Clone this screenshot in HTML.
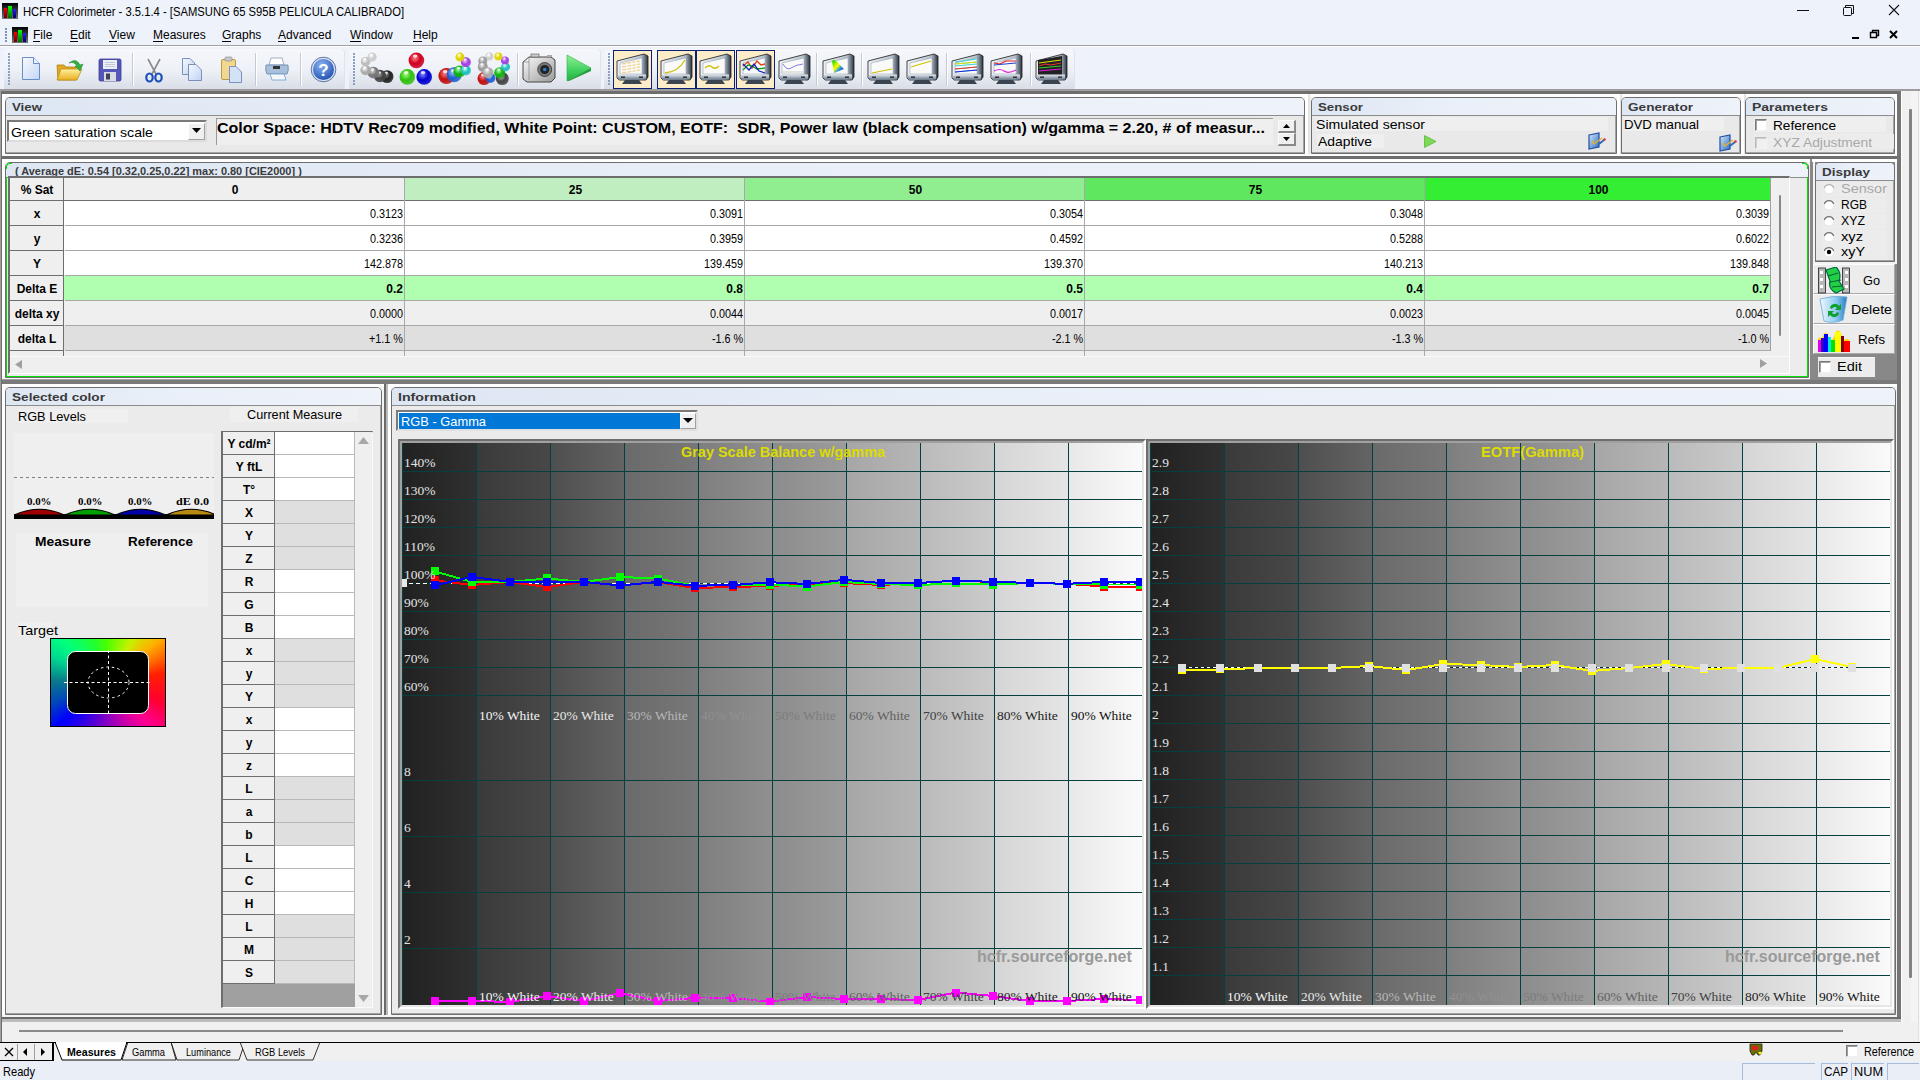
<!DOCTYPE html><html><head><meta charset="utf-8"><title>HCFR Colorimeter</title><style>
html,body{margin:0;padding:0}
body{width:1920px;height:1080px;position:relative;overflow:hidden;background:#f0f0f0;font-family:"Liberation Sans",sans-serif;font-size:12px}
.a{position:absolute;box-sizing:border-box}
.t{position:absolute;white-space:pre}
</style></head><body>
<div class="a" style="left:0px;top:0px;width:1920px;height:90px;background:#eef2fa;"></div>
<svg class="a" style="left:2px;top:3px;" width="16" height="16" viewBox="0 0 16 16"><defs><linearGradient id="gi" x1="0" y1="0" x2="0" y2="1"><stop offset="0" stop-color="#000"/><stop offset="1" stop-color="#777"/></linearGradient><linearGradient id="gr" x1="0" y1="0" x2="0" y2="1"><stop offset="0" stop-color="#f00"/><stop offset="1" stop-color="#600"/></linearGradient><linearGradient id="gg" x1="0" y1="0" x2="0" y2="1"><stop offset="0" stop-color="#0f0"/><stop offset="1" stop-color="#060"/></linearGradient><linearGradient id="gb" x1="0" y1="0" x2="0" y2="1"><stop offset="0" stop-color="#22f"/><stop offset="1" stop-color="#006"/></linearGradient></defs><rect x="0" y="0" width="16" height="16" fill="url(#gi)"/><rect x="2" y="5" width="3" height="10" fill="url(#gr)"/><rect x="6" y="3" width="4" height="12" fill="url(#gg)"/><rect x="11" y="6" width="3" height="9" fill="url(#gb)"/></svg>
<div class="t" style="left:23.00px;top:5.84px;font-size:12px;line-height:12px;font-family:'Liberation Sans',sans-serif;font-weight:400;color:#000;transform:scaleX(0.9368);transform-origin:0 0;">HCFR Colorimeter - 3.5.1.4 - [SAMSUNG 65 S95B PELICULA CALIBRADO]</div>
<svg class="a" style="left:1790px;top:0px;" width="120" height="22" viewBox="0 0 120 22"><line x1="7" y1="10.5" x2="19" y2="10.5" stroke="#111" stroke-width="1"/><rect x="53.5" y="7.5" width="8" height="8" fill="none" stroke="#111" rx="1"/><path d="M55.5 7.5 V5.5 H63.5 V13.5 H61.5" fill="none" stroke="#111"/><path d="M99 5 L109 15 M109 5 L99 15" stroke="#111" stroke-width="1.1"/></svg>
<div class="a" style="left:0px;top:45px;width:1920px;height:1px;background:#a0a0a0;"></div>
<div class="a" style="left:0px;top:46px;width:1920px;height:1px;background:#ffffff;"></div>
<div class="a" style="left:5px;top:28px;width:2px;height:2px;background:#7d94b5;"></div>
<div class="a" style="left:5px;top:31px;width:2px;height:2px;background:#7d94b5;"></div>
<div class="a" style="left:5px;top:34px;width:2px;height:2px;background:#7d94b5;"></div>
<div class="a" style="left:5px;top:37px;width:2px;height:2px;background:#7d94b5;"></div>
<div class="a" style="left:5px;top:40px;width:2px;height:2px;background:#7d94b5;"></div>
<svg class="a" style="left:12px;top:27px;" width="16" height="16" viewBox="0 0 16 16"><defs><linearGradient id="gi" x1="0" y1="0" x2="0" y2="1"><stop offset="0" stop-color="#000"/><stop offset="1" stop-color="#777"/></linearGradient><linearGradient id="gr" x1="0" y1="0" x2="0" y2="1"><stop offset="0" stop-color="#f00"/><stop offset="1" stop-color="#600"/></linearGradient><linearGradient id="gg" x1="0" y1="0" x2="0" y2="1"><stop offset="0" stop-color="#0f0"/><stop offset="1" stop-color="#060"/></linearGradient><linearGradient id="gb" x1="0" y1="0" x2="0" y2="1"><stop offset="0" stop-color="#22f"/><stop offset="1" stop-color="#006"/></linearGradient></defs><rect x="0" y="0" width="16" height="16" fill="url(#gi)"/><rect x="2" y="5" width="3" height="10" fill="url(#gr)"/><rect x="6" y="3" width="4" height="12" fill="url(#gg)"/><rect x="11" y="6" width="3" height="9" fill="url(#gb)"/></svg>
<div class="t" style="left:33.00px;top:28.84px;font-size:12px;line-height:12px;font-family:'Liberation Sans',sans-serif;font-weight:400;color:#000;">File</div>
<div class="a" style="left:33px;top:41px;width:7px;height:1px;background:#000;"></div>
<div class="t" style="left:70.00px;top:28.84px;font-size:12px;line-height:12px;font-family:'Liberation Sans',sans-serif;font-weight:400;color:#000;">Edit</div>
<div class="a" style="left:70px;top:41px;width:8px;height:1px;background:#000;"></div>
<div class="t" style="left:109.00px;top:28.84px;font-size:12px;line-height:12px;font-family:'Liberation Sans',sans-serif;font-weight:400;color:#000;">View</div>
<div class="a" style="left:109px;top:41px;width:8px;height:1px;background:#000;"></div>
<div class="t" style="left:153.00px;top:28.84px;font-size:12px;line-height:12px;font-family:'Liberation Sans',sans-serif;font-weight:400;color:#000;">Measures</div>
<div class="a" style="left:153px;top:41px;width:10px;height:1px;background:#000;"></div>
<div class="t" style="left:222.00px;top:28.84px;font-size:12px;line-height:12px;font-family:'Liberation Sans',sans-serif;font-weight:400;color:#000;">Graphs</div>
<div class="a" style="left:222px;top:41px;width:9px;height:1px;background:#000;"></div>
<div class="t" style="left:278.00px;top:28.84px;font-size:12px;line-height:12px;font-family:'Liberation Sans',sans-serif;font-weight:400;color:#000;">Advanced</div>
<div class="a" style="left:278px;top:41px;width:8px;height:1px;background:#000;"></div>
<div class="t" style="left:350.00px;top:28.84px;font-size:12px;line-height:12px;font-family:'Liberation Sans',sans-serif;font-weight:400;color:#000;">Window</div>
<div class="a" style="left:350px;top:41px;width:11px;height:1px;background:#000;"></div>
<div class="t" style="left:413.00px;top:28.84px;font-size:12px;line-height:12px;font-family:'Liberation Sans',sans-serif;font-weight:400;color:#000;">Help</div>
<div class="a" style="left:413px;top:41px;width:9px;height:1px;background:#000;"></div>
<svg class="a" style="left:1845px;top:26px;" width="60" height="16" viewBox="0 0 60 16"><rect x="7" y="11" width="7" height="2" fill="#000"/><path d="M25.5 6.5 h6 v5 h-6 z M27.5 6.5 v-2 h6 v5 h-2" fill="none" stroke="#000" stroke-width="1.4"/><path d="M45 5 L52 12 M52 5 L45 12" stroke="#000" stroke-width="2"/></svg>
<div class="a" style="left:4px;top:49px;width:341px;height:41px;background:linear-gradient(#f5f7fb,#eef1f7 50%,#d8dde6);border-radius:4px 4px 0 0;box-shadow:inset -1px 0 0 #e0e4ea;"></div>
<div class="a" style="left:8px;top:53px;width:2px;height:2px;background:#8aa0c0;"></div>
<div class="a" style="left:8px;top:56px;width:2px;height:2px;background:#8aa0c0;"></div>
<div class="a" style="left:8px;top:59px;width:2px;height:2px;background:#8aa0c0;"></div>
<div class="a" style="left:8px;top:62px;width:2px;height:2px;background:#8aa0c0;"></div>
<div class="a" style="left:8px;top:65px;width:2px;height:2px;background:#8aa0c0;"></div>
<div class="a" style="left:8px;top:68px;width:2px;height:2px;background:#8aa0c0;"></div>
<div class="a" style="left:8px;top:71px;width:2px;height:2px;background:#8aa0c0;"></div>
<div class="a" style="left:8px;top:74px;width:2px;height:2px;background:#8aa0c0;"></div>
<div class="a" style="left:8px;top:77px;width:2px;height:2px;background:#8aa0c0;"></div>
<div class="a" style="left:8px;top:80px;width:2px;height:2px;background:#8aa0c0;"></div>
<div class="a" style="left:8px;top:83px;width:2px;height:2px;background:#8aa0c0;"></div>
<div class="a" style="left:349px;top:49px;width:252px;height:41px;background:linear-gradient(#f5f7fb,#eef1f7 50%,#d8dde6);border-radius:4px 4px 0 0;box-shadow:inset -1px 0 0 #e0e4ea;"></div>
<div class="a" style="left:353px;top:53px;width:2px;height:2px;background:#8aa0c0;"></div>
<div class="a" style="left:353px;top:56px;width:2px;height:2px;background:#8aa0c0;"></div>
<div class="a" style="left:353px;top:59px;width:2px;height:2px;background:#8aa0c0;"></div>
<div class="a" style="left:353px;top:62px;width:2px;height:2px;background:#8aa0c0;"></div>
<div class="a" style="left:353px;top:65px;width:2px;height:2px;background:#8aa0c0;"></div>
<div class="a" style="left:353px;top:68px;width:2px;height:2px;background:#8aa0c0;"></div>
<div class="a" style="left:353px;top:71px;width:2px;height:2px;background:#8aa0c0;"></div>
<div class="a" style="left:353px;top:74px;width:2px;height:2px;background:#8aa0c0;"></div>
<div class="a" style="left:353px;top:77px;width:2px;height:2px;background:#8aa0c0;"></div>
<div class="a" style="left:353px;top:80px;width:2px;height:2px;background:#8aa0c0;"></div>
<div class="a" style="left:353px;top:83px;width:2px;height:2px;background:#8aa0c0;"></div>
<div class="a" style="left:604px;top:49px;width:471px;height:41px;background:linear-gradient(#f5f7fb,#eef1f7 50%,#d8dde6);border-radius:4px 4px 0 0;box-shadow:inset -1px 0 0 #e0e4ea;"></div>
<div class="a" style="left:608px;top:53px;width:2px;height:2px;background:#8aa0c0;"></div>
<div class="a" style="left:608px;top:56px;width:2px;height:2px;background:#8aa0c0;"></div>
<div class="a" style="left:608px;top:59px;width:2px;height:2px;background:#8aa0c0;"></div>
<div class="a" style="left:608px;top:62px;width:2px;height:2px;background:#8aa0c0;"></div>
<div class="a" style="left:608px;top:65px;width:2px;height:2px;background:#8aa0c0;"></div>
<div class="a" style="left:608px;top:68px;width:2px;height:2px;background:#8aa0c0;"></div>
<div class="a" style="left:608px;top:71px;width:2px;height:2px;background:#8aa0c0;"></div>
<div class="a" style="left:608px;top:74px;width:2px;height:2px;background:#8aa0c0;"></div>
<div class="a" style="left:608px;top:77px;width:2px;height:2px;background:#8aa0c0;"></div>
<div class="a" style="left:608px;top:80px;width:2px;height:2px;background:#8aa0c0;"></div>
<div class="a" style="left:608px;top:83px;width:2px;height:2px;background:#8aa0c0;"></div>
<div class="a" style="left:0px;top:89px;width:1920px;height:1px;background:#b0b4ba;"></div>
<div class="a" style="left:132px;top:53px;width:1px;height:33px;background:#c5cad2;"></div>
<div class="a" style="left:133px;top:53px;width:1px;height:33px;background:#ffffff;"></div>
<div class="a" style="left:255px;top:53px;width:1px;height:33px;background:#c5cad2;"></div>
<div class="a" style="left:256px;top:53px;width:1px;height:33px;background:#ffffff;"></div>
<div class="a" style="left:300px;top:53px;width:1px;height:33px;background:#c5cad2;"></div>
<div class="a" style="left:301px;top:53px;width:1px;height:33px;background:#ffffff;"></div>
<div class="a" style="left:517px;top:53px;width:1px;height:33px;background:#c5cad2;"></div>
<div class="a" style="left:518px;top:53px;width:1px;height:33px;background:#ffffff;"></div>
<div class="a" style="left:816px;top:53px;width:1px;height:33px;background:#c5cad2;"></div>
<div class="a" style="left:817px;top:53px;width:1px;height:33px;background:#ffffff;"></div>
<div class="a" style="left:861px;top:53px;width:1px;height:33px;background:#c5cad2;"></div>
<div class="a" style="left:862px;top:53px;width:1px;height:33px;background:#ffffff;"></div>
<div class="a" style="left:946px;top:53px;width:1px;height:33px;background:#c5cad2;"></div>
<div class="a" style="left:947px;top:53px;width:1px;height:33px;background:#ffffff;"></div>
<div class="a" style="left:1030px;top:53px;width:1px;height:33px;background:#c5cad2;"></div>
<div class="a" style="left:1031px;top:53px;width:1px;height:33px;background:#ffffff;"></div>
<svg class="a" style="left:20px;top:55px;" width="22" height="27" viewBox="0 0 22 27"><defs><linearGradient id="ndg" x1="0" y1="0" x2="1" y2="1"><stop offset="0" stop-color="#f8fbff"/><stop offset="1" stop-color="#c4d6f4"/></linearGradient></defs><path d="M2.5 2.5 H13.5 L19.5 8.5 V24.5 H2.5 Z" fill="url(#ndg)" stroke="#6a8cc8"/><path d="M13.5 2.5 V8.5 H19.5" fill="#e8f0fc" stroke="#6a8cc8"/></svg>
<svg class="a" style="left:56px;top:57px;" width="28" height="25" viewBox="0 0 28 25"><defs><linearGradient id="fdg" x1="0" y1="0" x2="0" y2="1"><stop offset="0" stop-color="#fff0a0"/><stop offset="1" stop-color="#e8b020"/></linearGradient></defs><path d="M1 8 h7 l2 2 h10 v13 H2 Z" fill="#e0a820" stroke="#b08010" stroke-width="0.8"/><path d="M1 23 L5 12 H26 L21 23 Z" fill="url(#fdg)" stroke="#c09020" stroke-width="0.8"/><path d="M13 6 Q20 0 24 8 L27 7 L24 14 L19 9 L21 9 Q18 4 13 6 Z" fill="#30b040" stroke="#208030" stroke-width="0.5"/></svg>
<svg class="a" style="left:98px;top:58px;" width="24" height="24" viewBox="0 0 24 24"><rect x="1" y="1" width="22" height="22" rx="1.5" fill="#5456b8" stroke="#3a3c90" stroke-width="0.8"/><rect x="5" y="2" width="14" height="9" fill="#eceef6"/><path d="M7 4.5 H17 M7 6.5 H17 M7 8.5 H17" stroke="#b0b4c8" stroke-width="0.7"/><rect x="6" y="14" width="12" height="9" fill="#d8dae4"/><rect x="8" y="15.5" width="4" height="6" fill="#40425a"/></svg>
<svg class="a" style="left:144px;top:57px;" width="20" height="26" viewBox="0 0 20 26"><path d="M4 2 L12 17 M16 2 L8 17" stroke="#8a8a8a" stroke-width="1.6"/><ellipse cx="5.5" cy="20.5" rx="3.2" ry="4" fill="none" stroke="#1d4fb8" stroke-width="2.2"/><ellipse cx="14.5" cy="20.5" rx="3.2" ry="4" fill="none" stroke="#1d4fb8" stroke-width="2.2"/></svg>
<svg class="a" style="left:180px;top:56px;" width="24" height="27" viewBox="0 0 24 27"><defs><linearGradient id="cpg" x1="0" y1="0" x2="1" y2="1"><stop offset="0" stop-color="#f4f8ff"/><stop offset="1" stop-color="#c0d4f4"/></linearGradient></defs><path d="M2.5 2.5 H10 L14.5 7 V18.5 H2.5 Z" fill="url(#cpg)" stroke="#7a90b8"/><path d="M8.5 8.5 H16 L21.5 14 V24.5 H8.5 Z" fill="url(#cpg)" stroke="#7a90b8"/></svg>
<svg class="a" style="left:220px;top:56px;" width="24" height="28" viewBox="0 0 24 28"><rect x="1.5" y="3.5" width="14" height="20" rx="1.5" fill="#f0d890" stroke="#b89a40"/><rect x="5" y="1" width="7" height="4" rx="1" fill="#c8c8c8" stroke="#888" stroke-width="0.6"/><path d="M9.5 10.5 H16 L21.5 16 V26.5 H9.5 Z" fill="#d4e2f8" stroke="#7a90b8"/></svg>
<svg class="a" style="left:264px;top:57px;" width="26" height="25" viewBox="0 0 26 25"><path d="M7 1 H18 L20 8 H5 Z" fill="#fff" stroke="#8a9ab0" stroke-width="0.8"/><path d="M2 8 Q1 14 3 17 H23 Q25 14 24 8 Z" fill="#a8c0dc" stroke="#6a84a8" stroke-width="0.8"/><rect x="9" y="9" width="7" height="3" fill="#333"/><path d="M6 17 L8 23 H22 L20 17 Z" fill="#f4f8fc" stroke="#6aa0d0" stroke-width="0.8"/></svg>
<svg class="a" style="left:310px;top:56px;" width="27" height="27" viewBox="0 0 27 27"><defs><radialGradient id="hg" cx="0.4" cy="0.3" r="0.75"><stop offset="0" stop-color="#8ab4f4"/><stop offset="1" stop-color="#1f4fb0"/></radialGradient></defs><circle cx="13.5" cy="13.5" r="12.3" fill="#d8e0ee" stroke="#5a74a8" stroke-width="1"/><circle cx="13.5" cy="13.5" r="10.5" fill="url(#hg)"/><text x="13.5" y="20" font-family="Liberation Sans" font-weight="700" font-size="17" fill="#fff" text-anchor="middle">?</text></svg>
<svg class="a" style="left:355px;top:50px;" width="40" height="36" viewBox="0 0 40 36"><defs><radialGradient id="bg1" cx="0.4" cy="0.35" r="0.65"><stop offset="0" stop-color="#888"/><stop offset="0.55" stop-color="#222"/><stop offset="1" stop-color="#222" stop-opacity="0.85"/></radialGradient></defs><circle cx="32.10000000000002" cy="26.599999999999994" r="6.4" fill="url(#bg1)"/><ellipse cx="31.1" cy="23.1" rx="1.9" ry="1.3" fill="#fff" opacity="0.8"/><defs><radialGradient id="bg2" cx="0.4" cy="0.35" r="0.65"><stop offset="0" stop-color="#aaa"/><stop offset="0.55" stop-color="#444"/><stop offset="1" stop-color="#444" stop-opacity="0.85"/></radialGradient></defs><circle cx="25" cy="26" r="6.2" fill="url(#bg2)"/><ellipse cx="24.1" cy="22.6" rx="1.9" ry="1.2" fill="#fff" opacity="0.8"/><defs><radialGradient id="bg3" cx="0.4" cy="0.35" r="0.65"><stop offset="0" stop-color="#ddd"/><stop offset="0.55" stop-color="#777"/><stop offset="1" stop-color="#777" stop-opacity="0.85"/></radialGradient></defs><circle cx="18.399999999999977" cy="22.700000000000003" r="5.9" fill="url(#bg3)"/><ellipse cx="17.5" cy="19.5" rx="1.8" ry="1.2" fill="#fff" opacity="0.8"/><defs><radialGradient id="bg4" cx="0.4" cy="0.35" r="0.65"><stop offset="0" stop-color="#fff"/><stop offset="0.55" stop-color="#aaa"/><stop offset="1" stop-color="#aaa" stop-opacity="0.85"/></radialGradient></defs><circle cx="10.600000000000023" cy="20.099999999999994" r="5.2" fill="url(#bg4)"/><ellipse cx="9.8" cy="17.2" rx="1.6" ry="1.0" fill="#fff" opacity="0.8"/><defs><radialGradient id="bg5" cx="0.4" cy="0.35" r="0.65"><stop offset="0" stop-color="#fff"/><stop offset="0.55" stop-color="#bbb"/><stop offset="1" stop-color="#bbb" stop-opacity="0.85"/></radialGradient></defs><circle cx="10.600000000000023" cy="11.700000000000003" r="4.8" fill="url(#bg5)"/><ellipse cx="9.9" cy="9.1" rx="1.4" ry="1.0" fill="#fff" opacity="0.8"/><defs><radialGradient id="bg6" cx="0.4" cy="0.35" r="0.65"><stop offset="0" stop-color="#fff"/><stop offset="0.55" stop-color="#ccc"/><stop offset="1" stop-color="#ccc" stop-opacity="0.85"/></radialGradient></defs><circle cx="17.100000000000023" cy="7.100000000000001" r="4.6" fill="url(#bg6)"/><ellipse cx="16.4" cy="4.6" rx="1.4" ry="0.9" fill="#fff" opacity="0.8"/></svg>
<svg class="a" style="left:398px;top:50px;" width="36" height="36" viewBox="0 0 36 36"><defs><radialGradient id="bg7" cx="0.4" cy="0.35" r="0.65"><stop offset="0" stop-color="#ff8080"/><stop offset="0.55" stop-color="#d00020"/><stop offset="1" stop-color="#d00020" stop-opacity="0.85"/></radialGradient></defs><circle cx="18.399999999999977" cy="10.399999999999999" r="7.8" fill="url(#bg7)"/><ellipse cx="17.2" cy="6.1" rx="2.3" ry="1.6" fill="#fff" opacity="0.8"/><defs><radialGradient id="bg8" cx="0.4" cy="0.35" r="0.65"><stop offset="0" stop-color="#a0ff80"/><stop offset="0.55" stop-color="#30c010"/><stop offset="1" stop-color="#30c010" stop-opacity="0.85"/></radialGradient></defs><circle cx="9.300000000000011" cy="26.900000000000006" r="7.8" fill="url(#bg8)"/><ellipse cx="8.1" cy="22.6" rx="2.3" ry="1.6" fill="#fff" opacity="0.8"/><defs><radialGradient id="bg9" cx="0.4" cy="0.35" r="0.65"><stop offset="0" stop-color="#8080ff"/><stop offset="0.55" stop-color="#0000d0"/><stop offset="1" stop-color="#0000d0" stop-opacity="0.85"/></radialGradient></defs><circle cx="26.19999999999999" cy="26.900000000000006" r="7.8" fill="url(#bg9)"/><ellipse cx="25.0" cy="22.6" rx="2.3" ry="1.6" fill="#fff" opacity="0.8"/></svg>
<svg class="a" style="left:436px;top:50px;" width="40" height="36" viewBox="0 0 40 36"><defs><radialGradient id="bg10" cx="0.4" cy="0.35" r="0.65"><stop offset="0" stop-color="#ff8080"/><stop offset="0.55" stop-color="#c01010"/><stop offset="1" stop-color="#c01010" stop-opacity="0.85"/></radialGradient></defs><circle cx="10.399999999999977" cy="26" r="8" fill="url(#bg10)"/><ellipse cx="9.2" cy="21.6" rx="2.4" ry="1.6" fill="#fff" opacity="0.8"/><defs><radialGradient id="bg11" cx="0.4" cy="0.35" r="0.65"><stop offset="0" stop-color="#a0c0ff"/><stop offset="0.55" stop-color="#2060d0"/><stop offset="1" stop-color="#2060d0" stop-opacity="0.85"/></radialGradient></defs><circle cx="18.19999999999999" cy="24.700000000000003" r="7.5" fill="url(#bg11)"/><ellipse cx="17.1" cy="20.6" rx="2.2" ry="1.5" fill="#fff" opacity="0.8"/><defs><radialGradient id="bg12" cx="0.4" cy="0.35" r="0.65"><stop offset="0" stop-color="#a0ffa0"/><stop offset="0.55" stop-color="#10b010"/><stop offset="1" stop-color="#10b010" stop-opacity="0.85"/></radialGradient></defs><circle cx="23.399999999999977" cy="21.400000000000006" r="6" fill="url(#bg12)"/><ellipse cx="22.5" cy="18.1" rx="1.8" ry="1.2" fill="#fff" opacity="0.8"/><defs><radialGradient id="bg13" cx="0.4" cy="0.35" r="0.65"><stop offset="0" stop-color="#c0ffff"/><stop offset="0.55" stop-color="#20c0c0"/><stop offset="1" stop-color="#20c0c0" stop-opacity="0.85"/></radialGradient></defs><circle cx="29.899999999999977" cy="20.400000000000006" r="5" fill="url(#bg13)"/><ellipse cx="29.1" cy="17.7" rx="1.5" ry="1.0" fill="#fff" opacity="0.8"/><defs><radialGradient id="bg14" cx="0.4" cy="0.35" r="0.65"><stop offset="0" stop-color="#f0c0ff"/><stop offset="0.55" stop-color="#a040e0"/><stop offset="1" stop-color="#a040e0" stop-opacity="0.85"/></radialGradient></defs><circle cx="29.899999999999977" cy="12.299999999999997" r="5" fill="url(#bg14)"/><ellipse cx="29.1" cy="9.5" rx="1.5" ry="1.0" fill="#fff" opacity="0.8"/><defs><radialGradient id="bg15" cx="0.4" cy="0.35" r="0.65"><stop offset="0" stop-color="#ffffa0"/><stop offset="0.55" stop-color="#e0d000"/><stop offset="1" stop-color="#e0d000" stop-opacity="0.85"/></radialGradient></defs><circle cx="24" cy="7.100000000000001" r="4.5" fill="url(#bg15)"/><ellipse cx="23.3" cy="4.6" rx="1.3" ry="0.9" fill="#fff" opacity="0.8"/></svg>
<svg class="a" style="left:474px;top:50px;" width="40" height="36" viewBox="0 0 40 36"><defs><radialGradient id="bg16" cx="0.4" cy="0.35" r="0.65"><stop offset="0" stop-color="#ff8080"/><stop offset="0.55" stop-color="#c01010"/><stop offset="1" stop-color="#c01010" stop-opacity="0.85"/></radialGradient></defs><circle cx="10" cy="28.599999999999994" r="6.5" fill="url(#bg16)"/><ellipse cx="9.0" cy="25.0" rx="1.9" ry="1.3" fill="#fff" opacity="0.8"/><defs><radialGradient id="bg17" cx="0.4" cy="0.35" r="0.65"><stop offset="0" stop-color="#a0c0ff"/><stop offset="0.55" stop-color="#2060d0"/><stop offset="1" stop-color="#2060d0" stop-opacity="0.85"/></radialGradient></defs><circle cx="16.5" cy="28" r="5" fill="url(#bg17)"/><ellipse cx="15.8" cy="25.2" rx="1.5" ry="1.0" fill="#fff" opacity="0.8"/><defs><radialGradient id="bg18" cx="0.4" cy="0.35" r="0.65"><stop offset="0" stop-color="#bbb"/><stop offset="0.55" stop-color="#444"/><stop offset="1" stop-color="#444" stop-opacity="0.85"/></radialGradient></defs><circle cx="28.30000000000001" cy="28.599999999999994" r="6.5" fill="url(#bg18)"/><ellipse cx="27.3" cy="25.0" rx="1.9" ry="1.3" fill="#fff" opacity="0.8"/><defs><radialGradient id="bg19" cx="0.4" cy="0.35" r="0.65"><stop offset="0" stop-color="#a0ffa0"/><stop offset="0.55" stop-color="#10b010"/><stop offset="1" stop-color="#10b010" stop-opacity="0.85"/></radialGradient></defs><circle cx="25.69999999999999" cy="22.700000000000003" r="5.5" fill="url(#bg19)"/><ellipse cx="24.9" cy="19.7" rx="1.6" ry="1.1" fill="#fff" opacity="0.8"/><defs><radialGradient id="bg20" cx="0.4" cy="0.35" r="0.65"><stop offset="0" stop-color="#c0ffff"/><stop offset="0.55" stop-color="#20c0c0"/><stop offset="1" stop-color="#20c0c0" stop-opacity="0.85"/></radialGradient></defs><circle cx="31.600000000000023" cy="16.900000000000006" r="4.5" fill="url(#bg20)"/><ellipse cx="30.9" cy="14.4" rx="1.3" ry="0.9" fill="#fff" opacity="0.8"/><defs><radialGradient id="bg21" cx="0.4" cy="0.35" r="0.65"><stop offset="0" stop-color="#f0c0ff"/><stop offset="0.55" stop-color="#a040e0"/><stop offset="1" stop-color="#a040e0" stop-opacity="0.85"/></radialGradient></defs><circle cx="31" cy="10.399999999999999" r="4" fill="url(#bg21)"/><ellipse cx="30.4" cy="8.2" rx="1.2" ry="0.8" fill="#fff" opacity="0.8"/><defs><radialGradient id="bg22" cx="0.4" cy="0.35" r="0.65"><stop offset="0" stop-color="#ffffa0"/><stop offset="0.55" stop-color="#e0d000"/><stop offset="1" stop-color="#e0d000" stop-opacity="0.85"/></radialGradient></defs><circle cx="24.399999999999977" cy="6.5" r="4" fill="url(#bg22)"/><ellipse cx="23.8" cy="4.3" rx="1.2" ry="0.8" fill="#fff" opacity="0.8"/><defs><radialGradient id="bg23" cx="0.4" cy="0.35" r="0.65"><stop offset="0" stop-color="#fff"/><stop offset="0.55" stop-color="#ccc"/><stop offset="1" stop-color="#ccc" stop-opacity="0.85"/></radialGradient></defs><circle cx="15.300000000000011" cy="6.5" r="4" fill="url(#bg23)"/><ellipse cx="14.7" cy="4.3" rx="1.2" ry="0.8" fill="#fff" opacity="0.8"/><defs><radialGradient id="bg24" cx="0.4" cy="0.35" r="0.65"><stop offset="0" stop-color="#eee"/><stop offset="0.55" stop-color="#999"/><stop offset="1" stop-color="#999" stop-opacity="0.85"/></radialGradient></defs><circle cx="8.800000000000011" cy="11" r="4.5" fill="url(#bg24)"/><ellipse cx="8.1" cy="8.5" rx="1.3" ry="0.9" fill="#fff" opacity="0.8"/><defs><radialGradient id="bg25" cx="0.4" cy="0.35" r="0.65"><stop offset="0" stop-color="#eee"/><stop offset="0.55" stop-color="#999"/><stop offset="1" stop-color="#999" stop-opacity="0.85"/></radialGradient></defs><circle cx="8.800000000000011" cy="16.900000000000006" r="5" fill="url(#bg25)"/><ellipse cx="8.1" cy="14.2" rx="1.5" ry="1.0" fill="#fff" opacity="0.8"/><defs><radialGradient id="bg26" cx="0.4" cy="0.35" r="0.65"><stop offset="0" stop-color="#eee"/><stop offset="0.55" stop-color="#aaa"/><stop offset="1" stop-color="#aaa" stop-opacity="0.85"/></radialGradient></defs><circle cx="14" cy="22.700000000000003" r="5.5" fill="url(#bg26)"/><ellipse cx="13.2" cy="19.7" rx="1.6" ry="1.1" fill="#fff" opacity="0.8"/></svg>
<svg class="a" style="left:521px;top:52px;" width="36" height="33" viewBox="0 0 36 33"><defs><linearGradient id="camg" x1="0" y1="0" x2="1" y2="1"><stop offset="0" stop-color="#fafafa"/><stop offset="1" stop-color="#9a9a9a"/></linearGradient></defs><path d="M2 10 L8 5 H30 L34 8 V26 L30 30 H6 L2 27 Z" fill="url(#camg)" stroke="#333" stroke-width="0.9"/><path d="M8 5 V28 M2 10 H8" stroke="#777" stroke-width="0.6" fill="none"/><rect x="10" y="2" width="8" height="3" fill="#ccc" stroke="#555" stroke-width="0.6"/><rect x="26" y="3" width="5" height="2" fill="#aaa"/><circle cx="23.7" cy="17.5" r="7" fill="#777" stroke="#333" stroke-width="0.8"/><circle cx="23.7" cy="17.5" r="4.5" fill="#222"/><circle cx="23.7" cy="17.5" r="1.8" fill="#2a7ad8"/></svg>
<svg class="a" style="left:566px;top:54px;" width="26" height="28" viewBox="0 0 26 28"><defs><linearGradient id="pg" x1="0" y1="0" x2="0" y2="1"><stop offset="0" stop-color="#90f090"/><stop offset="0.6" stop-color="#40d060"/><stop offset="1" stop-color="#20b040"/></linearGradient></defs><path d="M1 1 L25 14 L1 27 Z" fill="url(#pg)" stroke="#30b050" stroke-width="0.6"/><path d="M1 27 L25 14 L25 17 L3 27Z" fill="#22a040"/></svg>
<div class="a" style="left:613px;top:50px;width:39px;height:39px;background:#fdecc8;border:1.5px solid #0a1f78;"></div>
<svg class="a" style="left:616px;top:52px;" width="34" height="33" viewBox="0 0 34 33"><defs><linearGradient id="mfr" x1="0" y1="0" x2="1" y2="0"><stop offset="0" stop-color="#eef2f6"/><stop offset="0.78" stop-color="#b4c0cc"/><stop offset="1" stop-color="#2a3440"/></linearGradient><linearGradient id="mbz" x1="0" y1="0" x2="0" y2="1"><stop offset="0" stop-color="#e4eaf0"/><stop offset="1" stop-color="#6b7c90"/></linearGradient></defs><path d="M1 9 L28 2 L32 4 V25 L30 28 H3 L1 26 Z" fill="url(#mfr)" stroke="#1a1a1a" stroke-width="0.8"/><path d="M4 11 L26 6 V22 H4 Z" fill="#fafafa" stroke="#8c98a6" stroke-width="0.5"/><path d="M6 12 L24 9 M6 15 L24 12 M6 18 L24 15 M6 21 L24 18" stroke="#f0d8a0" stroke-width="1.6"/><path d="M11 11 V21 M16 10 V21 M20 9 V20" stroke="#fff" stroke-width="1"/><rect x="2" y="22.5" width="28" height="5" fill="url(#mbz)"/><rect x="5" y="24.5" width="4" height="1.5" fill="#333"/><rect x="23" y="24.5" width="4" height="1.5" fill="#333"/><path d="M9 28 h14 l3 4 h-20 z" fill="#3a4450"/></svg>
<div class="a" style="left:657px;top:50px;width:39px;height:39px;background:#fdecc8;border:1.5px solid #0a1f78;"></div>
<svg class="a" style="left:660px;top:52px;" width="34" height="33" viewBox="0 0 34 33"><defs><linearGradient id="mfr" x1="0" y1="0" x2="1" y2="0"><stop offset="0" stop-color="#eef2f6"/><stop offset="0.78" stop-color="#b4c0cc"/><stop offset="1" stop-color="#2a3440"/></linearGradient><linearGradient id="mbz" x1="0" y1="0" x2="0" y2="1"><stop offset="0" stop-color="#e4eaf0"/><stop offset="1" stop-color="#6b7c90"/></linearGradient></defs><path d="M1 9 L28 2 L32 4 V25 L30 28 H3 L1 26 Z" fill="url(#mfr)" stroke="#1a1a1a" stroke-width="0.8"/><path d="M4 11 L26 6 V22 H4 Z" fill="#fafafa" stroke="#8c98a6" stroke-width="0.5"/><path d="M5 21 Q18 20 25 8" fill="none" stroke="#d0c000" stroke-width="1.3"/><rect x="2" y="22.5" width="28" height="5" fill="url(#mbz)"/><rect x="5" y="24.5" width="4" height="1.5" fill="#333"/><rect x="23" y="24.5" width="4" height="1.5" fill="#333"/><path d="M9 28 h14 l3 4 h-20 z" fill="#3a4450"/></svg>
<div class="a" style="left:696px;top:50px;width:39px;height:39px;background:#fdecc8;border:1.5px solid #0a1f78;"></div>
<svg class="a" style="left:699px;top:52px;" width="34" height="33" viewBox="0 0 34 33"><defs><linearGradient id="mfr" x1="0" y1="0" x2="1" y2="0"><stop offset="0" stop-color="#eef2f6"/><stop offset="0.78" stop-color="#b4c0cc"/><stop offset="1" stop-color="#2a3440"/></linearGradient><linearGradient id="mbz" x1="0" y1="0" x2="0" y2="1"><stop offset="0" stop-color="#e4eaf0"/><stop offset="1" stop-color="#6b7c90"/></linearGradient></defs><path d="M1 9 L28 2 L32 4 V25 L30 28 H3 L1 26 Z" fill="url(#mfr)" stroke="#1a1a1a" stroke-width="0.8"/><path d="M4 11 L26 6 V22 H4 Z" fill="#fafafa" stroke="#8c98a6" stroke-width="0.5"/><path d="M6 16 Q10 12 13 15 T20 14" fill="none" stroke="#d0c000" stroke-width="1.3"/><rect x="2" y="22.5" width="28" height="5" fill="url(#mbz)"/><rect x="5" y="24.5" width="4" height="1.5" fill="#333"/><rect x="23" y="24.5" width="4" height="1.5" fill="#333"/><path d="M9 28 h14 l3 4 h-20 z" fill="#3a4450"/></svg>
<div class="a" style="left:736px;top:50px;width:39px;height:39px;background:#fdecc8;border:1.5px solid #0a1f78;"></div>
<svg class="a" style="left:739px;top:52px;" width="34" height="33" viewBox="0 0 34 33"><defs><linearGradient id="mfr" x1="0" y1="0" x2="1" y2="0"><stop offset="0" stop-color="#eef2f6"/><stop offset="0.78" stop-color="#b4c0cc"/><stop offset="1" stop-color="#2a3440"/></linearGradient><linearGradient id="mbz" x1="0" y1="0" x2="0" y2="1"><stop offset="0" stop-color="#e4eaf0"/><stop offset="1" stop-color="#6b7c90"/></linearGradient></defs><path d="M1 9 L28 2 L32 4 V25 L30 28 H3 L1 26 Z" fill="url(#mfr)" stroke="#1a1a1a" stroke-width="0.8"/><path d="M4 11 L26 6 V22 H4 Z" fill="#fafafa" stroke="#8c98a6" stroke-width="0.5"/><path d="M4 14 L9 10 L13 16 L18 9 L22 13 L26 12" fill="none" stroke="#e04010" stroke-width="1.3"/><path d="M4 18 L9 13 L13 14 L18 17 L26 16" fill="none" stroke="#10a010" stroke-width="1.3"/><path d="M4 12 L10 18 L15 12 L20 19 L26 21" fill="none" stroke="#1020c0" stroke-width="1.3"/><rect x="2" y="22.5" width="28" height="5" fill="url(#mbz)"/><rect x="5" y="24.5" width="4" height="1.5" fill="#333"/><rect x="23" y="24.5" width="4" height="1.5" fill="#333"/><path d="M9 28 h14 l3 4 h-20 z" fill="#3a4450"/></svg>
<svg class="a" style="left:778px;top:52px;" width="34" height="33" viewBox="0 0 34 33"><defs><linearGradient id="mfr" x1="0" y1="0" x2="1" y2="0"><stop offset="0" stop-color="#eef2f6"/><stop offset="0.78" stop-color="#b4c0cc"/><stop offset="1" stop-color="#2a3440"/></linearGradient><linearGradient id="mbz" x1="0" y1="0" x2="0" y2="1"><stop offset="0" stop-color="#e4eaf0"/><stop offset="1" stop-color="#6b7c90"/></linearGradient></defs><path d="M1 9 L28 2 L32 4 V25 L30 28 H3 L1 26 Z" fill="url(#mfr)" stroke="#1a1a1a" stroke-width="0.8"/><path d="M4 11 L26 6 V22 H4 Z" fill="#fafafa" stroke="#8c98a6" stroke-width="0.5"/><path d="M5 12 Q9 19 13 16 T25 12" fill="none" stroke="#8080e0" stroke-width="1"/><path d="M4 20 H26" stroke="#ccc"/><rect x="2" y="22.5" width="28" height="5" fill="url(#mbz)"/><rect x="5" y="24.5" width="4" height="1.5" fill="#333"/><rect x="23" y="24.5" width="4" height="1.5" fill="#333"/><path d="M9 28 h14 l3 4 h-20 z" fill="#3a4450"/></svg>
<svg class="a" style="left:822px;top:52px;" width="34" height="33" viewBox="0 0 34 33"><defs><linearGradient id="mfr" x1="0" y1="0" x2="1" y2="0"><stop offset="0" stop-color="#eef2f6"/><stop offset="0.78" stop-color="#b4c0cc"/><stop offset="1" stop-color="#2a3440"/></linearGradient><linearGradient id="mbz" x1="0" y1="0" x2="0" y2="1"><stop offset="0" stop-color="#e4eaf0"/><stop offset="1" stop-color="#6b7c90"/></linearGradient></defs><path d="M1 9 L28 2 L32 4 V25 L30 28 H3 L1 26 Z" fill="url(#mfr)" stroke="#1a1a1a" stroke-width="0.8"/><path d="M4 11 L26 6 V22 H4 Z" fill="#fafafa" stroke="#8c98a6" stroke-width="0.5"/><defs><linearGradient id="cie" x1="0" y1="0" x2="1" y2="1"><stop offset="0" stop-color="#0c0"/><stop offset="0.45" stop-color="#ff0"/><stop offset="0.7" stop-color="#08f"/><stop offset="1" stop-color="#f04"/></linearGradient></defs><path d="M10 9 Q12 7 14 9 L22 17 L12 21 Z" fill="url(#cie)"/><rect x="2" y="22.5" width="28" height="5" fill="url(#mbz)"/><rect x="5" y="24.5" width="4" height="1.5" fill="#333"/><rect x="23" y="24.5" width="4" height="1.5" fill="#333"/><path d="M9 28 h14 l3 4 h-20 z" fill="#3a4450"/></svg>
<svg class="a" style="left:867px;top:52px;" width="34" height="33" viewBox="0 0 34 33"><defs><linearGradient id="mfr" x1="0" y1="0" x2="1" y2="0"><stop offset="0" stop-color="#eef2f6"/><stop offset="0.78" stop-color="#b4c0cc"/><stop offset="1" stop-color="#2a3440"/></linearGradient><linearGradient id="mbz" x1="0" y1="0" x2="0" y2="1"><stop offset="0" stop-color="#e4eaf0"/><stop offset="1" stop-color="#6b7c90"/></linearGradient></defs><path d="M1 9 L28 2 L32 4 V25 L30 28 H3 L1 26 Z" fill="url(#mfr)" stroke="#1a1a1a" stroke-width="0.8"/><path d="M4 11 L26 6 V22 H4 Z" fill="#fafafa" stroke="#8c98a6" stroke-width="0.5"/><path d="M5 21 L25 17" stroke="#d0c000" stroke-width="1.2"/><rect x="2" y="22.5" width="28" height="5" fill="url(#mbz)"/><rect x="5" y="24.5" width="4" height="1.5" fill="#333"/><rect x="23" y="24.5" width="4" height="1.5" fill="#333"/><path d="M9 28 h14 l3 4 h-20 z" fill="#3a4450"/></svg>
<svg class="a" style="left:906px;top:52px;" width="34" height="33" viewBox="0 0 34 33"><defs><linearGradient id="mfr" x1="0" y1="0" x2="1" y2="0"><stop offset="0" stop-color="#eef2f6"/><stop offset="0.78" stop-color="#b4c0cc"/><stop offset="1" stop-color="#2a3440"/></linearGradient><linearGradient id="mbz" x1="0" y1="0" x2="0" y2="1"><stop offset="0" stop-color="#e4eaf0"/><stop offset="1" stop-color="#6b7c90"/></linearGradient></defs><path d="M1 9 L28 2 L32 4 V25 L30 28 H3 L1 26 Z" fill="url(#mfr)" stroke="#1a1a1a" stroke-width="0.8"/><path d="M4 11 L26 6 V22 H4 Z" fill="#fafafa" stroke="#8c98a6" stroke-width="0.5"/><path d="M5 15 L25 9" stroke="#d0c000" stroke-width="1.2"/><rect x="2" y="22.5" width="28" height="5" fill="url(#mbz)"/><rect x="5" y="24.5" width="4" height="1.5" fill="#333"/><rect x="23" y="24.5" width="4" height="1.5" fill="#333"/><path d="M9 28 h14 l3 4 h-20 z" fill="#3a4450"/></svg>
<svg class="a" style="left:951px;top:52px;" width="34" height="33" viewBox="0 0 34 33"><defs><linearGradient id="mfr" x1="0" y1="0" x2="1" y2="0"><stop offset="0" stop-color="#eef2f6"/><stop offset="0.78" stop-color="#b4c0cc"/><stop offset="1" stop-color="#2a3440"/></linearGradient><linearGradient id="mbz" x1="0" y1="0" x2="0" y2="1"><stop offset="0" stop-color="#e4eaf0"/><stop offset="1" stop-color="#6b7c90"/></linearGradient></defs><path d="M1 9 L28 2 L32 4 V25 L30 28 H3 L1 26 Z" fill="url(#mfr)" stroke="#1a1a1a" stroke-width="0.8"/><path d="M4 11 L26 6 V22 H4 Z" fill="#fafafa" stroke="#8c98a6" stroke-width="0.5"/><path d="M4 10 L26 7 M4 12 L26 10 M4 14 L26 12 M4 17 L26 15 M4 20 L26 18" stroke-width="1" stroke="#40d0d0"/><path d="M4 12 L26 10" stroke="#e0e000"/><path d="M4 17 L26 15" stroke="#f03030"/><path d="M4 20 L26 18" stroke="#2020e0"/><rect x="2" y="22.5" width="28" height="5" fill="url(#mbz)"/><rect x="5" y="24.5" width="4" height="1.5" fill="#333"/><rect x="23" y="24.5" width="4" height="1.5" fill="#333"/><path d="M9 28 h14 l3 4 h-20 z" fill="#3a4450"/></svg>
<svg class="a" style="left:990px;top:52px;" width="34" height="33" viewBox="0 0 34 33"><defs><linearGradient id="mfr" x1="0" y1="0" x2="1" y2="0"><stop offset="0" stop-color="#eef2f6"/><stop offset="0.78" stop-color="#b4c0cc"/><stop offset="1" stop-color="#2a3440"/></linearGradient><linearGradient id="mbz" x1="0" y1="0" x2="0" y2="1"><stop offset="0" stop-color="#e4eaf0"/><stop offset="1" stop-color="#6b7c90"/></linearGradient></defs><path d="M1 9 L28 2 L32 4 V25 L30 28 H3 L1 26 Z" fill="url(#mfr)" stroke="#1a1a1a" stroke-width="0.8"/><path d="M4 11 L26 6 V22 H4 Z" fill="#fafafa" stroke="#8c98a6" stroke-width="0.5"/><path d="M4 11 L10 12 L16 9 L26 9" stroke="#e02020" stroke-width="1.2" fill="none"/><path d="M4 13 L26 11" stroke="#2040d0" stroke-width="1.2"/><path d="M4 19 Q10 16 14 19 T26 18" stroke="#e020e0" stroke-width="1.2" fill="none"/><rect x="2" y="22.5" width="28" height="5" fill="url(#mbz)"/><rect x="5" y="24.5" width="4" height="1.5" fill="#333"/><rect x="23" y="24.5" width="4" height="1.5" fill="#333"/><path d="M9 28 h14 l3 4 h-20 z" fill="#3a4450"/></svg>
<svg class="a" style="left:1035px;top:52px;" width="34" height="33" viewBox="0 0 34 33"><defs><linearGradient id="mfr" x1="0" y1="0" x2="1" y2="0"><stop offset="0" stop-color="#eef2f6"/><stop offset="0.78" stop-color="#b4c0cc"/><stop offset="1" stop-color="#2a3440"/></linearGradient><linearGradient id="mbz" x1="0" y1="0" x2="0" y2="1"><stop offset="0" stop-color="#e4eaf0"/><stop offset="1" stop-color="#6b7c90"/></linearGradient></defs><path d="M1 9 L28 2 L32 4 V25 L30 28 H3 L1 26 Z" fill="url(#mfr)" stroke="#1a1a1a" stroke-width="0.8"/><path d="M4 11 L26 6 V22 H4 Z" fill="#fafafa" stroke="#8c98a6" stroke-width="0.5"/><path d="M3 8 L27 4 V23 L3 23 Z" fill="#222"/><path d="M4 11 L26 8" stroke="#e0e000"/><path d="M4 14 L10 12 L16 13 L26 11" stroke="#f03030" fill="none"/><path d="M4 16 L26 14" stroke="#30d030"/><path d="M4 19 L26 17" stroke="#e020e0"/><rect x="2" y="22.5" width="28" height="5" fill="url(#mbz)"/><rect x="5" y="24.5" width="4" height="1.5" fill="#333"/><rect x="23" y="24.5" width="4" height="1.5" fill="#333"/><path d="M9 28 h14 l3 4 h-20 z" fill="#3a4450"/></svg>
<div class="a" style="left:0px;top:89px;width:1920px;height:1px;background:#9a9a9a;"></div>
<div class="a" style="left:0px;top:90px;width:1920px;height:1px;background:#a0a0a0;"></div>
<div class="a" style="left:0px;top:91px;width:1901px;height:3px;background:#6e6e6e;"></div>
<div class="a" style="left:0px;top:91px;width:1px;height:989px;background:#a0a0a0;"></div>
<div class="a" style="left:1px;top:91px;width:1px;height:951px;background:#6e6e6e;"></div>
<div class="a" style="left:2px;top:94px;width:1895px;height:3px;background:#ffffff;"></div>
<div class="a" style="left:2px;top:94px;width:3px;height:925px;background:#ffffff;"></div>
<div class="a" style="left:1897px;top:91px;width:4px;height:931px;background:#747474;"></div>
<div class="a" style="left:1901px;top:92px;width:1px;height:950px;background:#ffffff;"></div>
<div class="a" style="left:1902px;top:92px;width:16px;height:950px;background:#f0f0f0;"></div>
<div class="a" style="left:1911px;top:92px;width:7px;height:950px;background:#f4f4f4;"></div>
<div class="a" style="left:1918px;top:92px;width:1px;height:950px;background:#e0e0e0;"></div>
<div class="a" style="left:1919px;top:92px;width:1px;height:950px;background:#f8f8f8;"></div>
<div class="a" style="left:1909px;top:109px;width:3px;height:869px;background:#828282;border-radius:1px;"></div>
<div class="a" style="left:2px;top:154px;width:1895px;height:2px;background:#fafafa;"></div>
<div class="a" style="left:2px;top:156px;width:1895px;height:3px;background:#6e6e6e;"></div>
<div class="a" style="left:2px;top:159px;width:1895px;height:3px;background:#ffffff;"></div>
<div class="a" style="left:2px;top:377px;width:1809px;height:2px;background:#f8f8f8;"></div>
<div class="a" style="left:2px;top:379px;width:1809px;height:1px;background:#a0a0a0;"></div>
<div class="a" style="left:2px;top:380px;width:1895px;height:4px;background:#7a7a7a;"></div>
<div class="a" style="left:2px;top:384px;width:1895px;height:3px;background:#ffffff;"></div>
<div class="a" style="left:1305px;top:94px;width:5px;height:60px;background:#ffffff;"></div>
<div class="a" style="left:1308px;top:94px;width:2px;height:60px;background:#e4e4e4;"></div>
<div class="a" style="left:1617px;top:94px;width:5px;height:60px;background:#ffffff;"></div>
<div class="a" style="left:1620px;top:94px;width:2px;height:60px;background:#e4e4e4;"></div>
<div class="a" style="left:1741px;top:94px;width:5px;height:60px;background:#ffffff;"></div>
<div class="a" style="left:1744px;top:94px;width:2px;height:60px;background:#e4e4e4;"></div>
<div class="a" style="left:1895px;top:94px;width:2px;height:60px;background:#ffffff;"></div>
<div class="a" style="left:1810px;top:159px;width:87px;height:221px;background:#888888;"></div>
<div class="a" style="left:1812px;top:159px;width:85px;height:3px;background:#ffffff;"></div>
<div class="a" style="left:1813px;top:162px;width:2px;height:192px;background:#f4f4f4;"></div>
<div class="a" style="left:5px;top:97px;width:1300px;height:57px;background:#e9e9e9;border:1px solid #6e6e6e;border-radius:5px 5px 0 0;box-shadow:inset -1px -1px 0 #a4a4a4;"></div>
<div class="a" style="left:6px;top:98px;width:1298px;height:17px;background:linear-gradient(90deg,#dde6f3,#e9eff8 40%,#eef3fa);border-radius:4px 4px 0 0;"></div>
<div class="a" style="left:6px;top:115px;width:1298px;height:1px;background:#8c8c8c;"></div>
<div class="t" style="left:12.00px;top:101.69px;font-size:11px;line-height:11px;font-family:'Liberation Sans',sans-serif;font-weight:700;color:#3a3a3a;transform:scaleX(1.2053);transform-origin:0 0;">View</div>
<div class="a" style="left:7px;top:120px;width:200px;height:22px;background:#fff;border:2px solid #7a7a7a;border-right-color:#dcdcdc;border-bottom-color:#dcdcdc;"></div>
<div class="a" style="left:188px;top:123px;width:17px;height:17px;background:#f0f0f0;border:1px solid #a0a0a0;border-left-color:#fff;border-top-color:#fff;"></div>
<svg class="a" style="left:191px;top:128px;" width="11" height="6" viewBox="0 0 11 6"><path d="M1 0 H10 L5.5 5 Z" fill="#000"/></svg>
<div class="t" style="left:11.00px;top:126.00px;font-size:13px;line-height:13px;font-family:'Liberation Sans',sans-serif;font-weight:400;color:#000;transform:scaleX(1.0854);transform-origin:0 0;">Green saturation scale</div>
<div class="a" style="left:216px;top:118px;width:1057px;height:27px;background:#efefef;border-top:1px solid #9a9a9a;border-left:1px solid #9a9a9a;"></div>
<div class="t" style="left:217.00px;top:120.30px;font-size:15px;line-height:15px;font-family:'Liberation Sans',sans-serif;font-weight:700;color:#000;transform:scaleX(1.0671);transform-origin:0 0;">Color Space: HDTV Rec709 modified, White Point: CUSTOM, EOTF:  SDR, Power law (black compensation) w/gamma = 2.20, # of measur...</div>
<div class="a" style="left:1278px;top:120px;width:18px;height:13px;background:#f0f0f0;border-top:1px solid #fcfcfc;border-left:1px solid #fcfcfc;border-right:2px solid #8a8a8a;border-bottom:2px solid #8a8a8a;"></div>
<svg class="a" style="left:1283px;top:124px;" width="7" height="4" viewBox="0 0 7 4"><path d="M0 4 H7 L3.5 0 Z" fill="#000"/></svg>
<div class="a" style="left:1278px;top:133px;width:18px;height:13px;background:#f0f0f0;border-top:1px solid #fcfcfc;border-left:1px solid #fcfcfc;border-right:2px solid #8a8a8a;border-bottom:2px solid #8a8a8a;"></div>
<svg class="a" style="left:1283px;top:137px;" width="7" height="4" viewBox="0 0 7 4"><path d="M0 0 H7 L3.5 4 Z" fill="#000"/></svg>
<div class="a" style="left:1311px;top:97px;width:306px;height:57px;background:#e9e9e9;border:1px solid #6e6e6e;border-radius:5px 5px 0 0;box-shadow:inset -1px -1px 0 #a4a4a4;"></div>
<div class="a" style="left:1312px;top:98px;width:304px;height:17px;background:linear-gradient(90deg,#dde6f3,#e9eff8 40%,#eef3fa);border-radius:4px 4px 0 0;"></div>
<div class="a" style="left:1312px;top:115px;width:304px;height:1px;background:#8c8c8c;"></div>
<div class="t" style="left:1318.00px;top:101.69px;font-size:11px;line-height:11px;font-family:'Liberation Sans',sans-serif;font-weight:700;color:#3a3a3a;transform:scaleX(1.2060);transform-origin:0 0;">Sensor</div>
<div class="a" style="left:1316px;top:117px;width:292px;height:14px;background:#efefef;"></div>
<div class="t" style="left:1316.00px;top:118.00px;font-size:13px;line-height:13px;font-family:'Liberation Sans',sans-serif;font-weight:400;color:#000;transform:scaleX(1.0849);transform-origin:0 0;">Simulated sensor</div>
<div class="a" style="left:1317px;top:134px;width:67px;height:14px;background:#efefef;"></div>
<div class="t" style="left:1318.00px;top:135.00px;font-size:13px;line-height:13px;font-family:'Liberation Sans',sans-serif;font-weight:400;color:#000;transform:scaleX(1.0670);transform-origin:0 0;">Adaptive</div>
<svg class="a" style="left:1424px;top:135px;" width="13" height="13" viewBox="0 0 13 13"><path d="M0.5 0.5 L12 6.5 L0.5 12.5 Z" fill="#7ed957" stroke="#5cb83a" stroke-width="0.8"/></svg>
<svg class="a" style="left:1587px;top:132px;" width="19" height="18" viewBox="0 0 19 18"><defs><linearGradient id="ei" x1="0" y1="0" x2="1" y2="1"><stop offset="0" stop-color="#d8e8fa"/><stop offset="1" stop-color="#2b6cc4"/></linearGradient></defs><path d="M2 3 L12 1 V15 L2 17 Z" fill="url(#ei)" stroke="#1f4f9f" stroke-width="1.2"/><path d="M5 9 L7 12 L15 6" stroke="#e0b030" stroke-width="1.5" fill="none"/><path d="M12 12 L17 8" stroke="#2b6cc4" stroke-width="2"/><circle cx="17.5" cy="7.5" r="1.3" fill="#e03030"/></svg>
<div class="a" style="left:1621px;top:97px;width:120px;height:57px;background:#e9e9e9;border:1px solid #6e6e6e;border-radius:5px 5px 0 0;box-shadow:inset -1px -1px 0 #a4a4a4;"></div>
<div class="a" style="left:1622px;top:98px;width:118px;height:17px;background:linear-gradient(90deg,#dde6f3,#e9eff8 40%,#eef3fa);border-radius:4px 4px 0 0;"></div>
<div class="a" style="left:1622px;top:115px;width:118px;height:1px;background:#8c8c8c;"></div>
<div class="t" style="left:1628.00px;top:101.69px;font-size:11px;line-height:11px;font-family:'Liberation Sans',sans-serif;font-weight:700;color:#3a3a3a;transform:scaleX(1.2359);transform-origin:0 0;">Generator</div>
<div class="a" style="left:1624px;top:117px;width:100px;height:14px;background:#efefef;"></div>
<div class="t" style="left:1624.00px;top:118.00px;font-size:13px;line-height:13px;font-family:'Liberation Sans',sans-serif;font-weight:400;color:#000;transform:scaleX(1.0174);transform-origin:0 0;">DVD manual</div>
<svg class="a" style="left:1718px;top:134px;" width="19" height="18" viewBox="0 0 19 18"><defs><linearGradient id="ei" x1="0" y1="0" x2="1" y2="1"><stop offset="0" stop-color="#d8e8fa"/><stop offset="1" stop-color="#2b6cc4"/></linearGradient></defs><path d="M2 3 L12 1 V15 L2 17 Z" fill="url(#ei)" stroke="#1f4f9f" stroke-width="1.2"/><path d="M5 9 L7 12 L15 6" stroke="#e0b030" stroke-width="1.5" fill="none"/><path d="M12 12 L17 8" stroke="#2b6cc4" stroke-width="2"/><circle cx="17.5" cy="7.5" r="1.3" fill="#e03030"/></svg>
<div class="a" style="left:1745px;top:97px;width:150px;height:57px;background:#e9e9e9;border:1px solid #6e6e6e;border-radius:5px 5px 0 0;box-shadow:inset -1px -1px 0 #a4a4a4;"></div>
<div class="a" style="left:1746px;top:98px;width:148px;height:17px;background:linear-gradient(90deg,#dde6f3,#e9eff8 40%,#eef3fa);border-radius:4px 4px 0 0;"></div>
<div class="a" style="left:1746px;top:115px;width:148px;height:1px;background:#8c8c8c;"></div>
<div class="t" style="left:1752.00px;top:101.69px;font-size:11px;line-height:11px;font-family:'Liberation Sans',sans-serif;font-weight:700;color:#3a3a3a;transform:scaleX(1.2673);transform-origin:0 0;">Parameters</div>
<div class="a" style="left:1754px;top:117px;width:132px;height:15px;background:#efefef;"></div>
<div class="a" style="left:1755px;top:119px;width:12px;height:12px;background:#ffffff;border:1px solid #7a7a7a;border-right-color:#f0f0f0;border-bottom-color:#f0f0f0;box-shadow:inset 1px 1px 0 #a0a0a0;"></div>
<div class="t" style="left:1773.00px;top:119.00px;font-size:13px;line-height:13px;font-family:'Liberation Sans',sans-serif;font-weight:400;color:#000;transform:scaleX(1.0500);transform-origin:0 0;">Reference</div>
<div class="a" style="left:1754px;top:134px;width:140px;height:15px;background:#ececec;"></div>
<div class="a" style="left:1755px;top:137px;width:12px;height:12px;background:#f0f0f0;border:1px solid #b8b8b8;border-right-color:#f4f4f4;border-bottom-color:#f4f4f4;box-shadow:inset 1px 1px 0 #d0d0d0;"></div>
<div class="t" style="left:1773.00px;top:136.00px;font-size:13px;line-height:13px;font-family:'Liberation Sans',sans-serif;font-weight:400;color:#a8a8a8;transform:scaleX(1.0620);transform-origin:0 0;">XYZ Adjustment</div>
<div class="a" style="left:5px;top:162px;width:1804px;height:216px;background:#ececec;border:1px solid #6e6e6e;border-radius:5px 5px 0 0;box-shadow:inset -1px -1px 0 #a4a4a4;"></div>
<div class="a" style="left:6px;top:163px;width:1802px;height:14px;background:linear-gradient(90deg,#dde6f3,#e9eff8 40%,#eef3fa);border-radius:4px 4px 0 0;"></div>
<div class="a" style="left:6px;top:177px;width:1802px;height:1px;background:#8c8c8c;"></div>
<div class="a" style="left:6px;top:177px;width:1802px;height:200px;border:1px solid #00e000;border-top:none;"></div>
<div class="a" style="left:6px;top:163px;width:6px;height:6px;border-left:1px solid #00e000;border-top:1px solid #00e000;border-radius:4px 0 0 0;"></div>
<div class="a" style="left:1802px;top:163px;width:6px;height:6px;border-right:1px solid #00e000;border-top:1px solid #00e000;border-radius:0 4px 0 0;"></div>
<div class="t" style="left:15.00px;top:166.19px;font-size:11px;line-height:11px;font-family:'Liberation Sans',sans-serif;font-weight:700;color:#3a3a3a;transform:scaleX(0.9944);transform-origin:0 0;">( Average dE: 0.54 [0.32,0.25,0.22] max: 0.80 [CIE2000] )</div>
<div class="a" style="left:8px;top:176px;width:1782px;height:198px;background:#efefef;border-left:2px solid #6e6e6e;border-top:2px solid #6e6e6e;border-right:1px solid #fff;border-bottom:2px solid #fff;"></div>
<div class="a" style="left:10px;top:178px;width:54px;height:22px;background:#efefef;"></div>
<div class="t" style="left:20.66px;top:183.84px;font-size:12px;line-height:12px;font-family:'Liberation Sans',sans-serif;font-weight:700;color:#000;">% Sat</div>
<div class="a" style="left:65px;top:178px;width:340px;height:22px;background:#efefef;"></div>
<div class="t" style="left:231.66px;top:183.84px;font-size:12px;line-height:12px;font-family:'Liberation Sans',sans-serif;font-weight:700;color:#000;">0</div>
<div class="a" style="left:405px;top:178px;width:339px;height:22px;background:#c0eec0;"></div>
<div class="t" style="left:568.83px;top:183.84px;font-size:12px;line-height:12px;font-family:'Liberation Sans',sans-serif;font-weight:700;color:#000;">25</div>
<div class="a" style="left:745px;top:178px;width:339px;height:22px;background:#90ee90;"></div>
<div class="t" style="left:908.83px;top:183.84px;font-size:12px;line-height:12px;font-family:'Liberation Sans',sans-serif;font-weight:700;color:#000;">50</div>
<div class="a" style="left:1085px;top:178px;width:339px;height:22px;background:#5fe85f;"></div>
<div class="t" style="left:1248.83px;top:183.84px;font-size:12px;line-height:12px;font-family:'Liberation Sans',sans-serif;font-weight:700;color:#000;">75</div>
<div class="a" style="left:1425px;top:178px;width:345px;height:22px;background:#33ee33;"></div>
<div class="t" style="left:1588.49px;top:183.84px;font-size:12px;line-height:12px;font-family:'Liberation Sans',sans-serif;font-weight:700;color:#000;">100</div>
<div class="a" style="left:10px;top:200px;width:1761px;height:1px;background:#6e6e6e;"></div>
<div class="a" style="left:63px;top:178px;width:1px;height:173px;background:#6e6e6e;"></div>
<div class="a" style="left:404px;top:178px;width:1px;height:173px;background:#a8a8a8;"></div>
<div class="a" style="left:744px;top:178px;width:1px;height:173px;background:#a8a8a8;"></div>
<div class="a" style="left:1084px;top:178px;width:1px;height:173px;background:#a8a8a8;"></div>
<div class="a" style="left:1424px;top:178px;width:1px;height:173px;background:#a8a8a8;"></div>
<div class="a" style="left:1770px;top:178px;width:1px;height:173px;background:#a0a0a0;"></div>
<div class="a" style="left:10px;top:201px;width:53px;height:24px;background:#efefef;"></div>
<div class="a" style="left:64px;top:201px;width:1706px;height:24px;background:#ffffff;"></div>
<div class="a" style="left:404px;top:201px;width:1px;height:24px;background:#a8a8a8;"></div>
<div class="a" style="left:744px;top:201px;width:1px;height:24px;background:#a8a8a8;"></div>
<div class="a" style="left:1084px;top:201px;width:1px;height:24px;background:#a8a8a8;"></div>
<div class="a" style="left:1424px;top:201px;width:1px;height:24px;background:#a8a8a8;"></div>
<div class="a" style="left:10px;top:225px;width:54px;height:1px;background:#6e6e6e;"></div>
<div class="a" style="left:65px;top:225px;width:1705px;height:1px;background:#a8a8a8;"></div>
<div class="t" style="left:33.66px;top:207.84px;font-size:12px;line-height:12px;font-family:'Liberation Sans',sans-serif;font-weight:700;color:#000;">x</div>
<div class="t" style="left:369.98px;top:207.84px;font-size:12px;line-height:12px;font-family:'Liberation Sans',sans-serif;font-weight:400;color:#000;transform:scaleX(0.9000);transform-origin:0 0;">0.3123</div>
<div class="t" style="left:709.98px;top:207.84px;font-size:12px;line-height:12px;font-family:'Liberation Sans',sans-serif;font-weight:400;color:#000;transform:scaleX(0.9000);transform-origin:0 0;">0.3091</div>
<div class="t" style="left:1049.98px;top:207.84px;font-size:12px;line-height:12px;font-family:'Liberation Sans',sans-serif;font-weight:400;color:#000;transform:scaleX(0.9000);transform-origin:0 0;">0.3054</div>
<div class="t" style="left:1389.98px;top:207.84px;font-size:12px;line-height:12px;font-family:'Liberation Sans',sans-serif;font-weight:400;color:#000;transform:scaleX(0.9000);transform-origin:0 0;">0.3048</div>
<div class="t" style="left:1735.98px;top:207.84px;font-size:12px;line-height:12px;font-family:'Liberation Sans',sans-serif;font-weight:400;color:#000;transform:scaleX(0.9000);transform-origin:0 0;">0.3039</div>
<div class="a" style="left:10px;top:226px;width:53px;height:24px;background:#efefef;"></div>
<div class="a" style="left:64px;top:226px;width:1706px;height:24px;background:#ffffff;"></div>
<div class="a" style="left:404px;top:226px;width:1px;height:24px;background:#a8a8a8;"></div>
<div class="a" style="left:744px;top:226px;width:1px;height:24px;background:#a8a8a8;"></div>
<div class="a" style="left:1084px;top:226px;width:1px;height:24px;background:#a8a8a8;"></div>
<div class="a" style="left:1424px;top:226px;width:1px;height:24px;background:#a8a8a8;"></div>
<div class="a" style="left:10px;top:250px;width:54px;height:1px;background:#6e6e6e;"></div>
<div class="a" style="left:65px;top:250px;width:1705px;height:1px;background:#a8a8a8;"></div>
<div class="t" style="left:33.66px;top:232.84px;font-size:12px;line-height:12px;font-family:'Liberation Sans',sans-serif;font-weight:700;color:#000;">y</div>
<div class="t" style="left:369.98px;top:232.84px;font-size:12px;line-height:12px;font-family:'Liberation Sans',sans-serif;font-weight:400;color:#000;transform:scaleX(0.9000);transform-origin:0 0;">0.3236</div>
<div class="t" style="left:709.98px;top:232.84px;font-size:12px;line-height:12px;font-family:'Liberation Sans',sans-serif;font-weight:400;color:#000;transform:scaleX(0.9000);transform-origin:0 0;">0.3959</div>
<div class="t" style="left:1049.98px;top:232.84px;font-size:12px;line-height:12px;font-family:'Liberation Sans',sans-serif;font-weight:400;color:#000;transform:scaleX(0.9000);transform-origin:0 0;">0.4592</div>
<div class="t" style="left:1389.98px;top:232.84px;font-size:12px;line-height:12px;font-family:'Liberation Sans',sans-serif;font-weight:400;color:#000;transform:scaleX(0.9000);transform-origin:0 0;">0.5288</div>
<div class="t" style="left:1735.98px;top:232.84px;font-size:12px;line-height:12px;font-family:'Liberation Sans',sans-serif;font-weight:400;color:#000;transform:scaleX(0.9000);transform-origin:0 0;">0.6022</div>
<div class="a" style="left:10px;top:251px;width:53px;height:24px;background:#efefef;"></div>
<div class="a" style="left:64px;top:251px;width:1706px;height:24px;background:#ffffff;"></div>
<div class="a" style="left:404px;top:251px;width:1px;height:24px;background:#a8a8a8;"></div>
<div class="a" style="left:744px;top:251px;width:1px;height:24px;background:#a8a8a8;"></div>
<div class="a" style="left:1084px;top:251px;width:1px;height:24px;background:#a8a8a8;"></div>
<div class="a" style="left:1424px;top:251px;width:1px;height:24px;background:#a8a8a8;"></div>
<div class="a" style="left:10px;top:275px;width:54px;height:1px;background:#6e6e6e;"></div>
<div class="a" style="left:65px;top:275px;width:1705px;height:1px;background:#a8a8a8;"></div>
<div class="t" style="left:33.00px;top:257.84px;font-size:12px;line-height:12px;font-family:'Liberation Sans',sans-serif;font-weight:700;color:#000;">Y</div>
<div class="t" style="left:363.98px;top:257.84px;font-size:12px;line-height:12px;font-family:'Liberation Sans',sans-serif;font-weight:400;color:#000;transform:scaleX(0.9000);transform-origin:0 0;">142.878</div>
<div class="t" style="left:703.98px;top:257.84px;font-size:12px;line-height:12px;font-family:'Liberation Sans',sans-serif;font-weight:400;color:#000;transform:scaleX(0.9000);transform-origin:0 0;">139.459</div>
<div class="t" style="left:1043.98px;top:257.84px;font-size:12px;line-height:12px;font-family:'Liberation Sans',sans-serif;font-weight:400;color:#000;transform:scaleX(0.9000);transform-origin:0 0;">139.370</div>
<div class="t" style="left:1383.98px;top:257.84px;font-size:12px;line-height:12px;font-family:'Liberation Sans',sans-serif;font-weight:400;color:#000;transform:scaleX(0.9000);transform-origin:0 0;">140.213</div>
<div class="t" style="left:1729.98px;top:257.84px;font-size:12px;line-height:12px;font-family:'Liberation Sans',sans-serif;font-weight:400;color:#000;transform:scaleX(0.9000);transform-origin:0 0;">139.848</div>
<div class="a" style="left:10px;top:276px;width:53px;height:24px;background:#efefef;"></div>
<div class="a" style="left:64px;top:276px;width:1706px;height:24px;background:#b0ffb0;"></div>
<div class="a" style="left:404px;top:276px;width:1px;height:24px;background:#a8a8a8;"></div>
<div class="a" style="left:744px;top:276px;width:1px;height:24px;background:#a8a8a8;"></div>
<div class="a" style="left:1084px;top:276px;width:1px;height:24px;background:#a8a8a8;"></div>
<div class="a" style="left:1424px;top:276px;width:1px;height:24px;background:#a8a8a8;"></div>
<div class="a" style="left:10px;top:300px;width:54px;height:1px;background:#6e6e6e;"></div>
<div class="a" style="left:65px;top:300px;width:1705px;height:1px;background:#a8a8a8;"></div>
<div class="t" style="left:16.66px;top:282.84px;font-size:12px;line-height:12px;font-family:'Liberation Sans',sans-serif;font-weight:700;color:#000;">Delta E</div>
<div class="t" style="left:386.33px;top:282.84px;font-size:12px;line-height:12px;font-family:'Liberation Sans',sans-serif;font-weight:700;color:#000;">0.2</div>
<div class="t" style="left:726.33px;top:282.84px;font-size:12px;line-height:12px;font-family:'Liberation Sans',sans-serif;font-weight:700;color:#000;">0.8</div>
<div class="t" style="left:1066.33px;top:282.84px;font-size:12px;line-height:12px;font-family:'Liberation Sans',sans-serif;font-weight:700;color:#000;">0.5</div>
<div class="t" style="left:1406.33px;top:282.84px;font-size:12px;line-height:12px;font-family:'Liberation Sans',sans-serif;font-weight:700;color:#000;">0.4</div>
<div class="t" style="left:1752.33px;top:282.84px;font-size:12px;line-height:12px;font-family:'Liberation Sans',sans-serif;font-weight:700;color:#000;">0.7</div>
<div class="a" style="left:10px;top:301px;width:53px;height:24px;background:#efefef;"></div>
<div class="a" style="left:64px;top:301px;width:1706px;height:24px;background:#efefef;"></div>
<div class="a" style="left:404px;top:301px;width:1px;height:24px;background:#a8a8a8;"></div>
<div class="a" style="left:744px;top:301px;width:1px;height:24px;background:#a8a8a8;"></div>
<div class="a" style="left:1084px;top:301px;width:1px;height:24px;background:#a8a8a8;"></div>
<div class="a" style="left:1424px;top:301px;width:1px;height:24px;background:#a8a8a8;"></div>
<div class="a" style="left:10px;top:325px;width:54px;height:1px;background:#6e6e6e;"></div>
<div class="a" style="left:65px;top:325px;width:1705px;height:1px;background:#a8a8a8;"></div>
<div class="t" style="left:14.66px;top:307.84px;font-size:12px;line-height:12px;font-family:'Liberation Sans',sans-serif;font-weight:700;color:#000;">delta xy</div>
<div class="t" style="left:369.98px;top:307.84px;font-size:12px;line-height:12px;font-family:'Liberation Sans',sans-serif;font-weight:400;color:#000;transform:scaleX(0.9000);transform-origin:0 0;">0.0000</div>
<div class="t" style="left:709.98px;top:307.84px;font-size:12px;line-height:12px;font-family:'Liberation Sans',sans-serif;font-weight:400;color:#000;transform:scaleX(0.9000);transform-origin:0 0;">0.0044</div>
<div class="t" style="left:1049.98px;top:307.84px;font-size:12px;line-height:12px;font-family:'Liberation Sans',sans-serif;font-weight:400;color:#000;transform:scaleX(0.9000);transform-origin:0 0;">0.0017</div>
<div class="t" style="left:1389.98px;top:307.84px;font-size:12px;line-height:12px;font-family:'Liberation Sans',sans-serif;font-weight:400;color:#000;transform:scaleX(0.9000);transform-origin:0 0;">0.0023</div>
<div class="t" style="left:1735.98px;top:307.84px;font-size:12px;line-height:12px;font-family:'Liberation Sans',sans-serif;font-weight:400;color:#000;transform:scaleX(0.9000);transform-origin:0 0;">0.0045</div>
<div class="a" style="left:10px;top:326px;width:53px;height:24px;background:#efefef;"></div>
<div class="a" style="left:64px;top:326px;width:1706px;height:24px;background:#dfdfdf;"></div>
<div class="a" style="left:404px;top:326px;width:1px;height:24px;background:#a8a8a8;"></div>
<div class="a" style="left:744px;top:326px;width:1px;height:24px;background:#a8a8a8;"></div>
<div class="a" style="left:1084px;top:326px;width:1px;height:24px;background:#a8a8a8;"></div>
<div class="a" style="left:1424px;top:326px;width:1px;height:24px;background:#a8a8a8;"></div>
<div class="a" style="left:10px;top:350px;width:54px;height:1px;background:#6e6e6e;"></div>
<div class="a" style="left:65px;top:350px;width:1705px;height:1px;background:#a8a8a8;"></div>
<div class="t" style="left:17.67px;top:332.84px;font-size:12px;line-height:12px;font-family:'Liberation Sans',sans-serif;font-weight:700;color:#000;">delta L</div>
<div class="t" style="left:369.08px;top:332.84px;font-size:12px;line-height:12px;font-family:'Liberation Sans',sans-serif;font-weight:400;color:#000;transform:scaleX(0.9000);transform-origin:0 0;">+1.1 %</div>
<div class="t" style="left:711.80px;top:332.84px;font-size:12px;line-height:12px;font-family:'Liberation Sans',sans-serif;font-weight:400;color:#000;transform:scaleX(0.9000);transform-origin:0 0;">-1.6 %</div>
<div class="t" style="left:1051.80px;top:332.84px;font-size:12px;line-height:12px;font-family:'Liberation Sans',sans-serif;font-weight:400;color:#000;transform:scaleX(0.9000);transform-origin:0 0;">-2.1 %</div>
<div class="t" style="left:1391.80px;top:332.84px;font-size:12px;line-height:12px;font-family:'Liberation Sans',sans-serif;font-weight:400;color:#000;transform:scaleX(0.9000);transform-origin:0 0;">-1.3 %</div>
<div class="t" style="left:1737.80px;top:332.84px;font-size:12px;line-height:12px;font-family:'Liberation Sans',sans-serif;font-weight:400;color:#000;transform:scaleX(0.9000);transform-origin:0 0;">-1.0 %</div>
<div class="a" style="left:10px;top:351px;width:54px;height:5px;background:#efefef;"></div>
<div class="a" style="left:65px;top:351px;width:1705px;height:5px;background:#efefef;"></div>
<div class="a" style="left:63px;top:351px;width:1px;height:5px;background:#6e6e6e;"></div>
<div class="a" style="left:404px;top:351px;width:1px;height:5px;background:#a8a8a8;"></div>
<div class="a" style="left:744px;top:351px;width:1px;height:5px;background:#a8a8a8;"></div>
<div class="a" style="left:1084px;top:351px;width:1px;height:5px;background:#a8a8a8;"></div>
<div class="a" style="left:1424px;top:351px;width:1px;height:5px;background:#a8a8a8;"></div>
<div class="a" style="left:10px;top:356px;width:1779px;height:17px;background:#efefef;border-top:1px solid #fafafa;"></div>
<svg class="a" style="left:15px;top:360px;" width="7" height="9" viewBox="0 0 7 9"><path d="M7 0 V9 L0 4.5 Z" fill="#a0a0a0"/></svg>
<svg class="a" style="left:1760px;top:359px;" width="7" height="9" viewBox="0 0 7 9"><path d="M0 0 V9 L7 4.5 Z" fill="#a0a0a0"/></svg>
<div class="a" style="left:1771px;top:178px;width:18px;height:178px;background:#efefef;"></div>
<div class="a" style="left:1779px;top:195px;width:2px;height:141px;background:#888;border-radius:1px;"></div>
<div class="a" style="left:1815px;top:162px;width:80px;height:100px;background:#e9e9e9;border:1px solid #6e6e6e;border-radius:5px 5px 0 0;box-shadow:inset -1px -1px 0 #a4a4a4;"></div>
<div class="a" style="left:1816px;top:163px;width:78px;height:17px;background:linear-gradient(90deg,#dde6f3,#e9eff8 40%,#eef3fa);border-radius:4px 4px 0 0;"></div>
<div class="a" style="left:1816px;top:180px;width:78px;height:1px;background:#8c8c8c;"></div>
<div class="t" style="left:1822.00px;top:166.69px;font-size:11px;line-height:11px;font-family:'Liberation Sans',sans-serif;font-weight:700;color:#3a3a3a;transform:scaleX(1.2259);transform-origin:0 0;">Display</div>
<div class="a" style="left:1895px;top:162px;width:2px;height:100px;background:#f4f4f4;"></div>
<div class="a" style="left:1813px;top:262px;width:84px;height:2px;background:#f4f4f4;"></div>
<div class="a" style="left:1822px;top:182px;width:65px;height:15px;background:#ececec;"></div>
<svg class="a" style="left:1823px;top:183px;" width="12" height="12" viewBox="0 0 12 12"><circle cx="6" cy="6" r="5" fill="#fff" stroke="#e0e0e0"/><path d="M1.3 5 A5 5 0 0 1 10.7 5" fill="none" stroke="#b4b4b4" stroke-width="1.2"/></svg>
<div class="t" style="left:1841.00px;top:182.00px;font-size:13px;line-height:13px;font-family:'Liberation Sans',sans-serif;font-weight:400;color:#a8a8a8;transform:scaleX(1.1164);transform-origin:0 0;">Sensor</div>
<div class="a" style="left:1822px;top:198px;width:65px;height:15px;background:#ececec;"></div>
<svg class="a" style="left:1823px;top:199px;" width="12" height="12" viewBox="0 0 12 12"><circle cx="6" cy="6" r="5" fill="#fff" stroke="#e8e8e8"/><path d="M1.3 5 A5 5 0 0 1 10.7 5" fill="none" stroke="#707070" stroke-width="1.2"/></svg>
<div class="t" style="left:1841.00px;top:198.00px;font-size:13px;line-height:13px;font-family:'Liberation Sans',sans-serif;font-weight:400;color:#000;transform:scaleX(0.9229);transform-origin:0 0;">RGB</div>
<div class="a" style="left:1822px;top:214px;width:65px;height:15px;background:#ececec;"></div>
<svg class="a" style="left:1823px;top:215px;" width="12" height="12" viewBox="0 0 12 12"><circle cx="6" cy="6" r="5" fill="#fff" stroke="#e8e8e8"/><path d="M1.3 5 A5 5 0 0 1 10.7 5" fill="none" stroke="#707070" stroke-width="1.2"/></svg>
<div class="t" style="left:1841.00px;top:214.00px;font-size:13px;line-height:13px;font-family:'Liberation Sans',sans-serif;font-weight:400;color:#000;transform:scaleX(0.9493);transform-origin:0 0;">XYZ</div>
<div class="a" style="left:1822px;top:230px;width:65px;height:15px;background:#ececec;"></div>
<svg class="a" style="left:1823px;top:231px;" width="12" height="12" viewBox="0 0 12 12"><circle cx="6" cy="6" r="5" fill="#fff" stroke="#e8e8e8"/><path d="M1.3 5 A5 5 0 0 1 10.7 5" fill="none" stroke="#707070" stroke-width="1.2"/></svg>
<div class="t" style="left:1841.00px;top:230.00px;font-size:13px;line-height:13px;font-family:'Liberation Sans',sans-serif;font-weight:400;color:#000;transform:scaleX(1.1282);transform-origin:0 0;">xyz</div>
<div class="a" style="left:1822px;top:245px;width:65px;height:15px;background:#ececec;"></div>
<svg class="a" style="left:1823px;top:246px;" width="12" height="12" viewBox="0 0 12 12"><circle cx="6" cy="6" r="5" fill="#fff" stroke="#e8e8e8"/><path d="M1.3 5 A5 5 0 0 1 10.7 5" fill="none" stroke="#707070" stroke-width="1.2"/><circle cx="6" cy="6" r="2.2" fill="#000"/></svg>
<div class="t" style="left:1841.00px;top:245.00px;font-size:13px;line-height:13px;font-family:'Liberation Sans',sans-serif;font-weight:400;color:#000;transform:scaleX(1.1074);transform-origin:0 0;">xyY</div>
<div class="a" style="left:1813px;top:264px;width:82px;height:30px;background:#ececec;border-top:1px solid #fcfcfc;border-left:1px solid #fcfcfc;border-right:1px solid #a8a8a8;border-bottom:1px solid #a8a8a8;"></div>
<div class="t" style="left:1863.00px;top:273.50px;font-size:13px;line-height:13px;font-family:'Liberation Sans',sans-serif;font-weight:400;color:#000;transform:scaleX(0.9802);transform-origin:0 0;">Go</div>
<div class="a" style="left:1813px;top:294px;width:82px;height:30px;background:#ececec;border-top:1px solid #fcfcfc;border-left:1px solid #fcfcfc;border-right:1px solid #a8a8a8;border-bottom:1px solid #a8a8a8;"></div>
<div class="t" style="left:1851.00px;top:302.50px;font-size:13px;line-height:13px;font-family:'Liberation Sans',sans-serif;font-weight:400;color:#000;transform:scaleX(1.0906);transform-origin:0 0;">Delete</div>
<div class="a" style="left:1813px;top:324px;width:82px;height:30px;background:#ececec;border-top:1px solid #fcfcfc;border-left:1px solid #fcfcfc;border-right:1px solid #a8a8a8;border-bottom:1px solid #a8a8a8;"></div>
<div class="t" style="left:1858.00px;top:332.50px;font-size:13px;line-height:13px;font-family:'Liberation Sans',sans-serif;font-weight:400;color:#000;transform:scaleX(1.0099);transform-origin:0 0;">Refs</div>
<svg class="a" style="left:1818px;top:267px;" width="32" height="27" viewBox="0 0 32 27"><rect x="0.5" y="1" width="7" height="25" fill="#b8b8b8" stroke="#222" stroke-width="0.8"/><rect x="24.5" y="1" width="7" height="25" fill="#b8b8b8" stroke="#222" stroke-width="0.8"/><path d="M2 4 h3 v3 h-3z M2 11 h3 v3 h-3z M2 18 h3 v3 h-3z M27 4 h3 v3 h-3z M27 11 h3 v3 h-3z M27 18 h3 v3 h-3z" fill="#fff"/><path d="M8 3 L18 0 Q24 6 21 14 L26 22 L18 26 Q10 22 12 14 Z" fill="#22d044" stroke="#064" stroke-width="1.2"/><path d="M10 9 L20 6 M12 15 L23 13 M14 20 L24 19" stroke="#063" stroke-width="1.2"/></svg>
<svg class="a" style="left:1819px;top:296px;" width="30" height="27" viewBox="0 0 30 27"><defs><linearGradient id="bin" x1="0" y1="0" x2="1" y2="0"><stop offset="0" stop-color="#f0f8ff"/><stop offset="0.6" stop-color="#8ccaf0"/><stop offset="1" stop-color="#2a7ac0"/></linearGradient></defs><path d="M1 3 Q14 -1 28 1 L24 24 Q14 28 5 25 Z" fill="url(#bin)" stroke="#6aaad8" stroke-width="0.8"/><path d="M11 12 A5 5 0 0 1 20 10 L22 8 V14 H16 L18 12 A3 3 0 0 0 13 13 Z M20 17 A5 5 0 0 1 11 19 L9 21 V15 H15 L13 17 A3 3 0 0 0 18 16 Z" fill="#10a030"/></svg>
<svg class="a" style="left:1818px;top:329px;" width="32" height="23" viewBox="0 0 32 23"><path d="M0 23 V10 L2 8 L4 10 L6 5 L8 3 L10 7 L12 9 L14 11 L16 8 L18 3 L20 1 L22 3 L24 7 L26 11 L28 10 L30 10 L32 12 V23 Z" fill="#ffd800"/><rect x="0" y="11" width="3" height="12" fill="#e000e0"/><rect x="3" y="9" width="3" height="14" fill="#3000d0"/><rect x="6" y="5" width="4" height="18" fill="#0000ff"/><rect x="10" y="8" width="3" height="15" fill="#00e8e8"/><rect x="13" y="11" width="4" height="12" fill="#00e000"/><rect x="17" y="3" width="6" height="20" fill="#ffff00"/><rect x="23" y="7" width="3" height="16" fill="#800000"/><rect x="26" y="12" width="6" height="11" fill="#ff0000"/></svg>
<div class="a" style="left:1818px;top:357px;width:57px;height:20px;background:#ececec;border-top:1px solid #fafafa;"></div>
<div class="a" style="left:1819px;top:361px;width:12px;height:12px;background:#ffffff;border:1px solid #7a7a7a;border-right-color:#f0f0f0;border-bottom-color:#f0f0f0;box-shadow:inset 1px 1px 0 #a0a0a0;"></div>
<div class="t" style="left:1837.00px;top:359.50px;font-size:13px;line-height:13px;font-family:'Liberation Sans',sans-serif;font-weight:400;color:#000;transform:scaleX(1.1158);transform-origin:0 0;">Edit</div>
<div class="a" style="left:382px;top:387px;width:2px;height:630px;background:#f4f4f4;"></div>
<div class="a" style="left:384px;top:384px;width:2px;height:635px;background:#6a6a6a;"></div>
<div class="a" style="left:386px;top:384px;width:2px;height:635px;background:#bcbcbc;"></div>
<div class="a" style="left:388px;top:384px;width:3px;height:635px;background:#ffffff;"></div>
<div class="a" style="left:5px;top:387px;width:377px;height:628px;background:#ebebeb;border:1px solid #6e6e6e;border-radius:5px 5px 0 0;box-shadow:inset -1px -1px 0 #a4a4a4;"></div>
<div class="a" style="left:6px;top:388px;width:375px;height:17px;background:linear-gradient(90deg,#dde6f3,#e9eff8 40%,#eef3fa);border-radius:4px 4px 0 0;"></div>
<div class="a" style="left:6px;top:405px;width:375px;height:1px;background:#8c8c8c;"></div>
<div class="t" style="left:12.00px;top:391.69px;font-size:11px;line-height:11px;font-family:'Liberation Sans',sans-serif;font-weight:700;color:#3a3a3a;transform:scaleX(1.2359);transform-origin:0 0;">Selected color</div>
<div class="a" style="left:18px;top:409px;width:110px;height:14px;background:#efefef;"></div>
<div class="t" style="left:18.00px;top:410.00px;font-size:13px;line-height:13px;font-family:'Liberation Sans',sans-serif;font-weight:400;color:#000;transform:scaleX(0.9802);transform-origin:0 0;">RGB Levels</div>
<div class="a" style="left:230px;top:407px;width:128px;height:15px;background:#efefef;"></div>
<div class="t" style="left:246.50px;top:408.00px;font-size:13px;line-height:13px;font-family:'Liberation Sans',sans-serif;font-weight:400;color:#000;transform:scaleX(0.9737);transform-origin:0 0;">Current Measure</div>
<div class="a" style="left:14px;top:433px;width:200px;height:86px;background:#efefef;"></div>
<svg class="a" style="left:14px;top:476px;" width="200" height="3" viewBox="0 0 200 3"><line x1="0" y1="1.5" x2="200" y2="1.5" stroke="#808080" stroke-width="1" stroke-dasharray="3,3"/></svg>
<svg class="a" style="left:14px;top:500px;" width="200" height="20" viewBox="0 0 200 20"><rect x="0" y="14" width="200" height="5" fill="#000"/><path d="M0.0 14.5 Q25.3 3 50.6 14.5 Z" fill="#000"/><path d="M3.0 14.5 Q25.3 5.2 47.6 14.5 Z" fill="#a00000"/><path d="M50.7 14.5 Q76.0 3 101.3 14.5 Z" fill="#000"/><path d="M53.7 14.5 Q76.0 5.2 98.3 14.5 Z" fill="#00a000"/><path d="M101.3 14.5 Q126.6 3 151.9 14.5 Z" fill="#000"/><path d="M104.3 14.5 Q126.6 5.2 148.9 14.5 Z" fill="#0000a8"/><path d="M152.0 14.5 Q177.3 3 202.6 14.5 Z" fill="#000"/><path d="M155.0 14.5 Q177.3 5.2 199.6 14.5 Z" fill="#b88810"/></svg>
<div class="t" style="left:26.75px;top:496.49px;font-size:11px;line-height:11px;font-family:'Liberation Serif',serif;font-weight:700;color:#000;transform:scaleX(0.9899);transform-origin:0 0;">0.0%</div>
<div class="t" style="left:77.55px;top:496.49px;font-size:11px;line-height:11px;font-family:'Liberation Serif',serif;font-weight:700;color:#000;transform:scaleX(0.9899);transform-origin:0 0;">0.0%</div>
<div class="t" style="left:128.35px;top:496.49px;font-size:11px;line-height:11px;font-family:'Liberation Serif',serif;font-weight:700;color:#000;transform:scaleX(0.9899);transform-origin:0 0;">0.0%</div>
<div class="t" style="left:175.90px;top:496.49px;font-size:11px;line-height:11px;font-family:'Liberation Serif',serif;font-weight:700;color:#000;transform:scaleX(1.1011);transform-origin:0 0;">dE 0.0</div>
<div class="a" style="left:16px;top:533px;width:192px;height:74px;background:#efefef;"></div>
<div class="t" style="left:35.00px;top:535.00px;font-size:13px;line-height:13px;font-family:'Liberation Sans',sans-serif;font-weight:700;color:#000;transform:scaleX(1.0613);transform-origin:0 0;">Measure</div>
<div class="t" style="left:127.50px;top:535.00px;font-size:13px;line-height:13px;font-family:'Liberation Sans',sans-serif;font-weight:700;color:#000;transform:scaleX(1.0335);transform-origin:0 0;">Reference</div>
<div class="a" style="left:18px;top:622px;width:34px;height:14px;background:#efefef;"></div>
<div class="t" style="left:18.00px;top:624.00px;font-size:13px;line-height:13px;font-family:'Liberation Sans',sans-serif;font-weight:400;color:#000;transform:scaleX(1.1068);transform-origin:0 0;">Target</div>
<div class="a" style="left:50px;top:638px;width:116px;height:89px;background:conic-gradient(from 0deg at 50% 50%,#50ff00 0deg,#c8f000 30deg,#ffb000 50deg,#ff2000 80deg,#ff0030 110deg,#ff0090 135deg,#c000b0 160deg,#6000d0 195deg,#0000ff 230deg,#0048b8 250deg,#0a7a8a 272deg,#00d890 295deg,#00ff80 312deg,#20ff30 340deg,#50ff00 360deg);border:1px solid #000;"></div>
<svg class="a" style="left:50px;top:638px;" width="116" height="89" viewBox="0 0 116 89"><rect x="17.5" y="13.5" width="81" height="62" rx="8" fill="#000" stroke="#fff"/><line x1="14" y1="44.5" x2="101" y2="44.5" stroke="#fff" stroke-dasharray="3,2.5"/><line x1="58.5" y1="12" x2="58.5" y2="77" stroke="#fff" stroke-dasharray="3,2.5"/><ellipse cx="58.5" cy="44.5" rx="20.5" ry="15.5" fill="none" stroke="#fff" stroke-dasharray="2.5,3"/></svg>
<div class="a" style="left:221px;top:431px;width:152px;height:577px;background:#efefef;border-left:2px solid #6e6e6e;border-top:2px solid #6e6e6e;border-right:1px solid #fafafa;border-bottom:1px solid #fafafa;"></div>
<div class="a" style="left:223px;top:432px;width:52px;height:23px;background:#efefef;"></div>
<div class="a" style="left:274px;top:432px;width:1px;height:23px;background:#6e6e6e;"></div>
<div class="a" style="left:275px;top:432px;width:80px;height:23px;background:#ffffff;"></div>
<div class="a" style="left:223px;top:454px;width:52px;height:1px;background:#6e6e6e;"></div>
<div class="a" style="left:275px;top:454px;width:80px;height:1px;background:#b8b8b8;"></div>
<div class="t" style="left:227.45px;top:437.84px;font-size:12px;line-height:12px;font-family:'Liberation Sans',sans-serif;font-weight:700;color:#000;">Y cd/m²</div>
<div class="a" style="left:223px;top:455px;width:52px;height:23px;background:#efefef;"></div>
<div class="a" style="left:274px;top:455px;width:1px;height:23px;background:#6e6e6e;"></div>
<div class="a" style="left:275px;top:455px;width:80px;height:23px;background:#ffffff;"></div>
<div class="a" style="left:223px;top:477px;width:52px;height:1px;background:#6e6e6e;"></div>
<div class="a" style="left:275px;top:477px;width:80px;height:1px;background:#b8b8b8;"></div>
<div class="t" style="left:235.78px;top:460.84px;font-size:12px;line-height:12px;font-family:'Liberation Sans',sans-serif;font-weight:700;color:#000;">Y ftL</div>
<div class="a" style="left:223px;top:478px;width:52px;height:23px;background:#efefef;"></div>
<div class="a" style="left:274px;top:478px;width:1px;height:23px;background:#6e6e6e;"></div>
<div class="a" style="left:275px;top:478px;width:80px;height:23px;background:#ffffff;"></div>
<div class="a" style="left:223px;top:500px;width:52px;height:1px;background:#6e6e6e;"></div>
<div class="a" style="left:275px;top:500px;width:80px;height:1px;background:#b8b8b8;"></div>
<div class="t" style="left:242.94px;top:483.84px;font-size:12px;line-height:12px;font-family:'Liberation Sans',sans-serif;font-weight:700;color:#000;">T°</div>
<div class="a" style="left:223px;top:501px;width:52px;height:23px;background:#efefef;"></div>
<div class="a" style="left:274px;top:501px;width:1px;height:23px;background:#6e6e6e;"></div>
<div class="a" style="left:275px;top:501px;width:80px;height:23px;background:#dfdfdf;"></div>
<div class="a" style="left:223px;top:523px;width:52px;height:1px;background:#6e6e6e;"></div>
<div class="a" style="left:275px;top:523px;width:80px;height:1px;background:#b8b8b8;"></div>
<div class="t" style="left:245.00px;top:506.84px;font-size:12px;line-height:12px;font-family:'Liberation Sans',sans-serif;font-weight:700;color:#000;">X</div>
<div class="a" style="left:223px;top:524px;width:52px;height:23px;background:#efefef;"></div>
<div class="a" style="left:274px;top:524px;width:1px;height:23px;background:#6e6e6e;"></div>
<div class="a" style="left:275px;top:524px;width:80px;height:23px;background:#dfdfdf;"></div>
<div class="a" style="left:223px;top:546px;width:52px;height:1px;background:#6e6e6e;"></div>
<div class="a" style="left:275px;top:546px;width:80px;height:1px;background:#b8b8b8;"></div>
<div class="t" style="left:245.00px;top:529.84px;font-size:12px;line-height:12px;font-family:'Liberation Sans',sans-serif;font-weight:700;color:#000;">Y</div>
<div class="a" style="left:223px;top:547px;width:52px;height:23px;background:#efefef;"></div>
<div class="a" style="left:274px;top:547px;width:1px;height:23px;background:#6e6e6e;"></div>
<div class="a" style="left:275px;top:547px;width:80px;height:23px;background:#dfdfdf;"></div>
<div class="a" style="left:223px;top:569px;width:52px;height:1px;background:#6e6e6e;"></div>
<div class="a" style="left:275px;top:569px;width:80px;height:1px;background:#b8b8b8;"></div>
<div class="t" style="left:245.34px;top:552.84px;font-size:12px;line-height:12px;font-family:'Liberation Sans',sans-serif;font-weight:700;color:#000;">Z</div>
<div class="a" style="left:223px;top:570px;width:52px;height:23px;background:#efefef;"></div>
<div class="a" style="left:274px;top:570px;width:1px;height:23px;background:#6e6e6e;"></div>
<div class="a" style="left:275px;top:570px;width:80px;height:23px;background:#ffffff;"></div>
<div class="a" style="left:223px;top:592px;width:52px;height:1px;background:#6e6e6e;"></div>
<div class="a" style="left:275px;top:592px;width:80px;height:1px;background:#b8b8b8;"></div>
<div class="t" style="left:244.66px;top:575.84px;font-size:12px;line-height:12px;font-family:'Liberation Sans',sans-serif;font-weight:700;color:#000;">R</div>
<div class="a" style="left:223px;top:593px;width:52px;height:23px;background:#efefef;"></div>
<div class="a" style="left:274px;top:593px;width:1px;height:23px;background:#6e6e6e;"></div>
<div class="a" style="left:275px;top:593px;width:80px;height:23px;background:#ffffff;"></div>
<div class="a" style="left:223px;top:615px;width:52px;height:1px;background:#6e6e6e;"></div>
<div class="a" style="left:275px;top:615px;width:80px;height:1px;background:#b8b8b8;"></div>
<div class="t" style="left:244.34px;top:598.84px;font-size:12px;line-height:12px;font-family:'Liberation Sans',sans-serif;font-weight:700;color:#000;">G</div>
<div class="a" style="left:223px;top:616px;width:52px;height:23px;background:#efefef;"></div>
<div class="a" style="left:274px;top:616px;width:1px;height:23px;background:#6e6e6e;"></div>
<div class="a" style="left:275px;top:616px;width:80px;height:23px;background:#ffffff;"></div>
<div class="a" style="left:223px;top:638px;width:52px;height:1px;background:#6e6e6e;"></div>
<div class="a" style="left:275px;top:638px;width:80px;height:1px;background:#b8b8b8;"></div>
<div class="t" style="left:244.66px;top:621.84px;font-size:12px;line-height:12px;font-family:'Liberation Sans',sans-serif;font-weight:700;color:#000;">B</div>
<div class="a" style="left:223px;top:639px;width:52px;height:23px;background:#efefef;"></div>
<div class="a" style="left:274px;top:639px;width:1px;height:23px;background:#6e6e6e;"></div>
<div class="a" style="left:275px;top:639px;width:80px;height:23px;background:#dfdfdf;"></div>
<div class="a" style="left:223px;top:661px;width:52px;height:1px;background:#6e6e6e;"></div>
<div class="a" style="left:275px;top:661px;width:80px;height:1px;background:#b8b8b8;"></div>
<div class="t" style="left:245.66px;top:644.84px;font-size:12px;line-height:12px;font-family:'Liberation Sans',sans-serif;font-weight:700;color:#000;">x</div>
<div class="a" style="left:223px;top:662px;width:52px;height:23px;background:#efefef;"></div>
<div class="a" style="left:274px;top:662px;width:1px;height:23px;background:#6e6e6e;"></div>
<div class="a" style="left:275px;top:662px;width:80px;height:23px;background:#dfdfdf;"></div>
<div class="a" style="left:223px;top:684px;width:52px;height:1px;background:#6e6e6e;"></div>
<div class="a" style="left:275px;top:684px;width:80px;height:1px;background:#b8b8b8;"></div>
<div class="t" style="left:245.66px;top:667.84px;font-size:12px;line-height:12px;font-family:'Liberation Sans',sans-serif;font-weight:700;color:#000;">y</div>
<div class="a" style="left:223px;top:685px;width:52px;height:23px;background:#efefef;"></div>
<div class="a" style="left:274px;top:685px;width:1px;height:23px;background:#6e6e6e;"></div>
<div class="a" style="left:275px;top:685px;width:80px;height:23px;background:#dfdfdf;"></div>
<div class="a" style="left:223px;top:707px;width:52px;height:1px;background:#6e6e6e;"></div>
<div class="a" style="left:275px;top:707px;width:80px;height:1px;background:#b8b8b8;"></div>
<div class="t" style="left:245.00px;top:690.84px;font-size:12px;line-height:12px;font-family:'Liberation Sans',sans-serif;font-weight:700;color:#000;">Y</div>
<div class="a" style="left:223px;top:708px;width:52px;height:23px;background:#efefef;"></div>
<div class="a" style="left:274px;top:708px;width:1px;height:23px;background:#6e6e6e;"></div>
<div class="a" style="left:275px;top:708px;width:80px;height:23px;background:#ffffff;"></div>
<div class="a" style="left:223px;top:730px;width:52px;height:1px;background:#6e6e6e;"></div>
<div class="a" style="left:275px;top:730px;width:80px;height:1px;background:#b8b8b8;"></div>
<div class="t" style="left:245.66px;top:713.84px;font-size:12px;line-height:12px;font-family:'Liberation Sans',sans-serif;font-weight:700;color:#000;">x</div>
<div class="a" style="left:223px;top:731px;width:52px;height:23px;background:#efefef;"></div>
<div class="a" style="left:274px;top:731px;width:1px;height:23px;background:#6e6e6e;"></div>
<div class="a" style="left:275px;top:731px;width:80px;height:23px;background:#ffffff;"></div>
<div class="a" style="left:223px;top:753px;width:52px;height:1px;background:#6e6e6e;"></div>
<div class="a" style="left:275px;top:753px;width:80px;height:1px;background:#b8b8b8;"></div>
<div class="t" style="left:245.66px;top:736.84px;font-size:12px;line-height:12px;font-family:'Liberation Sans',sans-serif;font-weight:700;color:#000;">y</div>
<div class="a" style="left:223px;top:754px;width:52px;height:23px;background:#efefef;"></div>
<div class="a" style="left:274px;top:754px;width:1px;height:23px;background:#6e6e6e;"></div>
<div class="a" style="left:275px;top:754px;width:80px;height:23px;background:#ffffff;"></div>
<div class="a" style="left:223px;top:776px;width:52px;height:1px;background:#6e6e6e;"></div>
<div class="a" style="left:275px;top:776px;width:80px;height:1px;background:#b8b8b8;"></div>
<div class="t" style="left:246.00px;top:759.84px;font-size:12px;line-height:12px;font-family:'Liberation Sans',sans-serif;font-weight:700;color:#000;">z</div>
<div class="a" style="left:223px;top:777px;width:52px;height:23px;background:#efefef;"></div>
<div class="a" style="left:274px;top:777px;width:1px;height:23px;background:#6e6e6e;"></div>
<div class="a" style="left:275px;top:777px;width:80px;height:23px;background:#dfdfdf;"></div>
<div class="a" style="left:223px;top:799px;width:52px;height:1px;background:#6e6e6e;"></div>
<div class="a" style="left:275px;top:799px;width:80px;height:1px;background:#b8b8b8;"></div>
<div class="t" style="left:245.34px;top:782.84px;font-size:12px;line-height:12px;font-family:'Liberation Sans',sans-serif;font-weight:700;color:#000;">L</div>
<div class="a" style="left:223px;top:800px;width:52px;height:23px;background:#efefef;"></div>
<div class="a" style="left:274px;top:800px;width:1px;height:23px;background:#6e6e6e;"></div>
<div class="a" style="left:275px;top:800px;width:80px;height:23px;background:#dfdfdf;"></div>
<div class="a" style="left:223px;top:822px;width:52px;height:1px;background:#6e6e6e;"></div>
<div class="a" style="left:275px;top:822px;width:80px;height:1px;background:#b8b8b8;"></div>
<div class="t" style="left:245.66px;top:805.84px;font-size:12px;line-height:12px;font-family:'Liberation Sans',sans-serif;font-weight:700;color:#000;">a</div>
<div class="a" style="left:223px;top:823px;width:52px;height:23px;background:#efefef;"></div>
<div class="a" style="left:274px;top:823px;width:1px;height:23px;background:#6e6e6e;"></div>
<div class="a" style="left:275px;top:823px;width:80px;height:23px;background:#dfdfdf;"></div>
<div class="a" style="left:223px;top:845px;width:52px;height:1px;background:#6e6e6e;"></div>
<div class="a" style="left:275px;top:845px;width:80px;height:1px;background:#b8b8b8;"></div>
<div class="t" style="left:245.34px;top:828.84px;font-size:12px;line-height:12px;font-family:'Liberation Sans',sans-serif;font-weight:700;color:#000;">b</div>
<div class="a" style="left:223px;top:846px;width:52px;height:23px;background:#efefef;"></div>
<div class="a" style="left:274px;top:846px;width:1px;height:23px;background:#6e6e6e;"></div>
<div class="a" style="left:275px;top:846px;width:80px;height:23px;background:#ffffff;"></div>
<div class="a" style="left:223px;top:868px;width:52px;height:1px;background:#6e6e6e;"></div>
<div class="a" style="left:275px;top:868px;width:80px;height:1px;background:#b8b8b8;"></div>
<div class="t" style="left:245.34px;top:851.84px;font-size:12px;line-height:12px;font-family:'Liberation Sans',sans-serif;font-weight:700;color:#000;">L</div>
<div class="a" style="left:223px;top:869px;width:52px;height:23px;background:#efefef;"></div>
<div class="a" style="left:274px;top:869px;width:1px;height:23px;background:#6e6e6e;"></div>
<div class="a" style="left:275px;top:869px;width:80px;height:23px;background:#ffffff;"></div>
<div class="a" style="left:223px;top:891px;width:52px;height:1px;background:#6e6e6e;"></div>
<div class="a" style="left:275px;top:891px;width:80px;height:1px;background:#b8b8b8;"></div>
<div class="t" style="left:244.66px;top:874.84px;font-size:12px;line-height:12px;font-family:'Liberation Sans',sans-serif;font-weight:700;color:#000;">C</div>
<div class="a" style="left:223px;top:892px;width:52px;height:23px;background:#efefef;"></div>
<div class="a" style="left:274px;top:892px;width:1px;height:23px;background:#6e6e6e;"></div>
<div class="a" style="left:275px;top:892px;width:80px;height:23px;background:#ffffff;"></div>
<div class="a" style="left:223px;top:914px;width:52px;height:1px;background:#6e6e6e;"></div>
<div class="a" style="left:275px;top:914px;width:80px;height:1px;background:#b8b8b8;"></div>
<div class="t" style="left:244.66px;top:897.84px;font-size:12px;line-height:12px;font-family:'Liberation Sans',sans-serif;font-weight:700;color:#000;">H</div>
<div class="a" style="left:223px;top:915px;width:52px;height:23px;background:#efefef;"></div>
<div class="a" style="left:274px;top:915px;width:1px;height:23px;background:#6e6e6e;"></div>
<div class="a" style="left:275px;top:915px;width:80px;height:23px;background:#dfdfdf;"></div>
<div class="a" style="left:223px;top:937px;width:52px;height:1px;background:#6e6e6e;"></div>
<div class="a" style="left:275px;top:937px;width:80px;height:1px;background:#b8b8b8;"></div>
<div class="t" style="left:245.34px;top:920.84px;font-size:12px;line-height:12px;font-family:'Liberation Sans',sans-serif;font-weight:700;color:#000;">L</div>
<div class="a" style="left:223px;top:938px;width:52px;height:23px;background:#efefef;"></div>
<div class="a" style="left:274px;top:938px;width:1px;height:23px;background:#6e6e6e;"></div>
<div class="a" style="left:275px;top:938px;width:80px;height:23px;background:#dfdfdf;"></div>
<div class="a" style="left:223px;top:960px;width:52px;height:1px;background:#6e6e6e;"></div>
<div class="a" style="left:275px;top:960px;width:80px;height:1px;background:#b8b8b8;"></div>
<div class="t" style="left:244.00px;top:943.84px;font-size:12px;line-height:12px;font-family:'Liberation Sans',sans-serif;font-weight:700;color:#000;">M</div>
<div class="a" style="left:223px;top:961px;width:52px;height:23px;background:#efefef;"></div>
<div class="a" style="left:274px;top:961px;width:1px;height:23px;background:#6e6e6e;"></div>
<div class="a" style="left:275px;top:961px;width:80px;height:23px;background:#dfdfdf;"></div>
<div class="a" style="left:223px;top:983px;width:52px;height:1px;background:#6e6e6e;"></div>
<div class="a" style="left:275px;top:983px;width:80px;height:1px;background:#b8b8b8;"></div>
<div class="t" style="left:245.00px;top:966.84px;font-size:12px;line-height:12px;font-family:'Liberation Sans',sans-serif;font-weight:700;color:#000;">S</div>
<div class="a" style="left:223px;top:984px;width:132px;height:23px;background:#a0a0a0;"></div>
<div class="a" style="left:354px;top:432px;width:1px;height:552px;background:#b8b8b8;"></div>
<div class="a" style="left:355px;top:432px;width:17px;height:575px;background:#efefef;"></div>
<svg class="a" style="left:358px;top:437px;" width="11" height="7" viewBox="0 0 11 7"><path d="M0 7 H11 L5.5 0 Z" fill="#a8a8a8"/></svg>
<svg class="a" style="left:358px;top:995px;" width="11" height="7" viewBox="0 0 11 7"><path d="M0 0 H11 L5.5 7 Z" fill="#a8a8a8"/></svg>
<div class="a" style="left:391px;top:387px;width:1505px;height:628px;background:#ebebeb;border:1px solid #6e6e6e;border-radius:5px 5px 0 0;box-shadow:inset -1px -1px 0 #a4a4a4;"></div>
<div class="a" style="left:392px;top:388px;width:1503px;height:17px;background:linear-gradient(90deg,#dde6f3,#e9eff8 40%,#eef3fa);border-radius:4px 4px 0 0;"></div>
<div class="a" style="left:392px;top:405px;width:1503px;height:1px;background:#8c8c8c;"></div>
<div class="t" style="left:398.00px;top:391.69px;font-size:11px;line-height:11px;font-family:'Liberation Sans',sans-serif;font-weight:700;color:#3a3a3a;transform:scaleX(1.2893);transform-origin:0 0;">Information</div>
<div class="a" style="left:396px;top:410px;width:302px;height:21px;background:#fff;border:2px solid #7a7a7a;border-right-color:#e0e0e0;border-bottom-color:#e0e0e0;"></div>
<div class="a" style="left:399px;top:413px;width:281px;height:16px;background:#0078d7;"></div>
<div class="t" style="left:401.00px;top:415.00px;font-size:13px;line-height:13px;font-family:'Liberation Sans',sans-serif;font-weight:400;color:#fff;transform:scaleX(0.9889);transform-origin:0 0;">RGB - Gamma</div>
<div class="a" style="left:680px;top:413px;width:16px;height:16px;background:#f0f0f0;border:1px solid #a0a0a0;border-left-color:#fff;border-top-color:#fff;"></div>
<svg class="a" style="left:683px;top:418px;" width="10" height="5" viewBox="0 0 10 5"><path d="M0 0 H10 L5 5 Z" fill="#000"/></svg>
<div class="a" style="left:398px;top:439px;width:748px;height:570px;border-top:2px solid #6e6e6e;border-left:2px solid #6e6e6e;border-right:2px solid #ffffff;border-bottom:2px solid #ffffff;"></div>
<div class="a" style="left:400px;top:441px;width:744px;height:566px;border-top:2px solid #a0a0a0;border-left:2px solid #a0a0a0;border-right:2px solid #e6e6e6;border-bottom:2px solid #e6e6e6;"></div>
<div class="a" style="left:402px;top:443px;width:74px;height:562px;background:linear-gradient(90deg,#212121,#303030);"></div>
<div class="a" style="left:476px;top:443px;width:74px;height:562px;background:linear-gradient(90deg,#3a3a3a,#484848);"></div>
<div class="a" style="left:550px;top:443px;width:74px;height:562px;background:linear-gradient(90deg,#4e4e4e,#646464);"></div>
<div class="a" style="left:624px;top:443px;width:74px;height:562px;background:linear-gradient(90deg,#6a6a6a,#787878);"></div>
<div class="a" style="left:698px;top:443px;width:74px;height:562px;background:linear-gradient(90deg,#7e7e7e,#909090);"></div>
<div class="a" style="left:772px;top:443px;width:74px;height:562px;background:linear-gradient(90deg,#8c8c8c,#9c9c9c);"></div>
<div class="a" style="left:846px;top:443px;width:74px;height:562px;background:linear-gradient(90deg,#a6a6a6,#b6b6b6);"></div>
<div class="a" style="left:920px;top:443px;width:74px;height:562px;background:linear-gradient(90deg,#bababa,#cbcbcb);"></div>
<div class="a" style="left:994px;top:443px;width:74px;height:562px;background:linear-gradient(90deg,#d5d5d5,#e5e5e5);"></div>
<div class="a" style="left:1068px;top:443px;width:74px;height:562px;background:linear-gradient(90deg,#e8e8e8,#fafafa);"></div>
<svg class="a" style="left:402px;top:443px;overflow:hidden;" width="740" height="562" viewBox="0 0 740 562"><rect x="0" y="0" width="1" height="562" fill="#044040"/><rect x="74" y="0" width="1" height="562" fill="#044040"/><rect x="148" y="0" width="1" height="562" fill="#044040"/><rect x="222" y="0" width="1" height="562" fill="#044040"/><rect x="296" y="0" width="1" height="562" fill="#044040"/><rect x="370" y="0" width="1" height="562" fill="#044040"/><rect x="444" y="0" width="1" height="562" fill="#044040"/><rect x="518" y="0" width="1" height="562" fill="#044040"/><rect x="592" y="0" width="1" height="562" fill="#044040"/><rect x="666" y="0" width="1" height="562" fill="#044040"/><rect x="0" y="28" width="740" height="1" fill="#044040"/><rect x="0" y="56" width="740" height="1" fill="#044040"/><rect x="0" y="84" width="740" height="1" fill="#044040"/><rect x="0" y="112" width="740" height="1" fill="#044040"/><rect x="0" y="140" width="740" height="1" fill="#044040"/><rect x="0" y="168" width="740" height="1" fill="#044040"/><rect x="0" y="196" width="740" height="1" fill="#044040"/><rect x="0" y="224" width="740" height="1" fill="#044040"/><rect x="0" y="252" width="740" height="1" fill="#044040"/><rect x="0" y="337" width="740" height="1" fill="#044040"/><rect x="0" y="393" width="740" height="1" fill="#044040"/><rect x="0" y="449" width="740" height="1" fill="#044040"/><rect x="0" y="505" width="740" height="1" fill="#044040"/><line x1="0" y1="140.5" x2="740" y2="140.5" stroke="#fff" stroke-width="1" stroke-dasharray="4,3"/><rect x="0" y="136" width="5" height="8" fill="#e8e8e8"/><polyline points="32.7,137.3 69.9,142.0 108.2,139.0 144.9,144.0 181.6,139.0 218.3,142.5 255.8,139.0 292.6,145.0 330.9,144.0 368.0,143.0 404.8,141.0 441.9,140.0 479.0,142.0 515.6,140.0 554.0,137.6 590.8,139.0 628.0,140.0 664.9,140.8 702.0,143.5 738.0,143.5" fill="none" stroke="#ff0000" stroke-width="2" shape-rendering="crispEdges"/><rect x="29" y="133" width="8" height="8" fill="#ff0000"/><rect x="66" y="138" width="8" height="8" fill="#ff0000"/><rect x="104" y="135" width="8" height="8" fill="#ff0000"/><rect x="141" y="140" width="8" height="8" fill="#ff0000"/><rect x="178" y="135" width="8" height="8" fill="#ff0000"/><rect x="214" y="138" width="8" height="8" fill="#ff0000"/><rect x="252" y="135" width="8" height="8" fill="#ff0000"/><rect x="289" y="141" width="8" height="8" fill="#ff0000"/><rect x="327" y="140" width="8" height="8" fill="#ff0000"/><rect x="364" y="139" width="8" height="8" fill="#ff0000"/><rect x="401" y="137" width="8" height="8" fill="#ff0000"/><rect x="438" y="136" width="8" height="8" fill="#ff0000"/><rect x="475" y="138" width="8" height="8" fill="#ff0000"/><rect x="512" y="136" width="8" height="8" fill="#ff0000"/><rect x="550" y="134" width="8" height="8" fill="#ff0000"/><rect x="587" y="135" width="8" height="8" fill="#ff0000"/><rect x="624" y="136" width="8" height="8" fill="#ff0000"/><rect x="661" y="137" width="8" height="8" fill="#ff0000"/><rect x="698" y="140" width="8" height="8" fill="#ff0000"/><rect x="734" y="140" width="8" height="8" fill="#ff0000"/><polyline points="32.7,128.4 69.9,138.9 108.2,139.0 144.9,135.4 181.6,139.0 218.3,134.0 255.8,135.5 292.6,142.7 330.9,142.1 368.0,141.5 404.8,143.5 441.9,139.0 479.0,141.0 515.6,142.0 554.0,140.5 590.8,141.5 628.0,140.0 664.9,140.8 702.0,141.5 738.0,141.5" fill="none" stroke="#00ff00" stroke-width="2" shape-rendering="crispEdges"/><rect x="29" y="124" width="8" height="8" fill="#00ff00"/><rect x="66" y="135" width="8" height="8" fill="#00ff00"/><rect x="104" y="135" width="8" height="8" fill="#00ff00"/><rect x="141" y="131" width="8" height="8" fill="#00ff00"/><rect x="178" y="135" width="8" height="8" fill="#00ff00"/><rect x="214" y="130" width="8" height="8" fill="#00ff00"/><rect x="252" y="132" width="8" height="8" fill="#00ff00"/><rect x="289" y="139" width="8" height="8" fill="#00ff00"/><rect x="327" y="138" width="8" height="8" fill="#00ff00"/><rect x="364" y="138" width="8" height="8" fill="#00ff00"/><rect x="401" y="140" width="8" height="8" fill="#00ff00"/><rect x="438" y="135" width="8" height="8" fill="#00ff00"/><rect x="475" y="137" width="8" height="8" fill="#00ff00"/><rect x="512" y="138" width="8" height="8" fill="#00ff00"/><rect x="550" y="136" width="8" height="8" fill="#00ff00"/><rect x="587" y="138" width="8" height="8" fill="#00ff00"/><rect x="624" y="136" width="8" height="8" fill="#00ff00"/><rect x="661" y="137" width="8" height="8" fill="#00ff00"/><rect x="698" y="138" width="8" height="8" fill="#00ff00"/><rect x="734" y="138" width="8" height="8" fill="#00ff00"/><polyline points="32.7,142.5 69.9,133.9 108.2,138.9 144.9,138.6 181.6,138.9 218.3,142.5 255.8,138.9 292.6,142.7 330.9,142.1 368.0,139.2 404.8,141.0 441.9,136.8 479.0,140.0 515.6,140.0 554.0,137.6 590.8,138.9 628.0,139.9 664.9,140.8 702.0,138.9 738.0,139.0" fill="none" stroke="#0000ff" stroke-width="2" shape-rendering="crispEdges"/><rect x="29" y="138" width="8" height="8" fill="#0000ff"/><rect x="66" y="130" width="8" height="8" fill="#0000ff"/><rect x="104" y="135" width="8" height="8" fill="#0000ff"/><rect x="141" y="135" width="8" height="8" fill="#0000ff"/><rect x="178" y="135" width="8" height="8" fill="#0000ff"/><rect x="214" y="138" width="8" height="8" fill="#0000ff"/><rect x="252" y="135" width="8" height="8" fill="#0000ff"/><rect x="289" y="139" width="8" height="8" fill="#0000ff"/><rect x="327" y="138" width="8" height="8" fill="#0000ff"/><rect x="364" y="135" width="8" height="8" fill="#0000ff"/><rect x="401" y="137" width="8" height="8" fill="#0000ff"/><rect x="438" y="133" width="8" height="8" fill="#0000ff"/><rect x="475" y="136" width="8" height="8" fill="#0000ff"/><rect x="512" y="136" width="8" height="8" fill="#0000ff"/><rect x="550" y="134" width="8" height="8" fill="#0000ff"/><rect x="587" y="135" width="8" height="8" fill="#0000ff"/><rect x="624" y="136" width="8" height="8" fill="#0000ff"/><rect x="661" y="137" width="8" height="8" fill="#0000ff"/><rect x="698" y="135" width="8" height="8" fill="#0000ff"/><rect x="734" y="135" width="8" height="8" fill="#0000ff"/><polyline points="32.7,557.8 69.9,557.8 108.2,559.0 144.9,553.0 181.6,558.0 218.3,550.0 255.8,558.0 292.6,555.0 330.9,555.0 368.0,558.7 404.8,554.0 441.9,556.0 479.0,556.0 515.6,557.0 554.0,549.5 590.8,553.0 628.0,558.0 664.9,558.0 702.0,556.0 738.0,557.0" fill="none" stroke="#ff00ff" stroke-width="2" shape-rendering="crispEdges"/><rect x="29" y="554" width="8" height="8" fill="#ff00ff"/><rect x="66" y="554" width="8" height="8" fill="#ff00ff"/><rect x="104" y="555" width="8" height="8" fill="#ff00ff"/><rect x="141" y="549" width="8" height="8" fill="#ff00ff"/><rect x="178" y="554" width="8" height="8" fill="#ff00ff"/><rect x="214" y="546" width="8" height="8" fill="#ff00ff"/><rect x="252" y="554" width="8" height="8" fill="#ff00ff"/><rect x="289" y="551" width="8" height="8" fill="#ff00ff"/><rect x="327" y="551" width="8" height="8" fill="#ff00ff"/><rect x="364" y="555" width="8" height="8" fill="#ff00ff"/><rect x="401" y="550" width="8" height="8" fill="#ff00ff"/><rect x="438" y="552" width="8" height="8" fill="#ff00ff"/><rect x="475" y="552" width="8" height="8" fill="#ff00ff"/><rect x="512" y="553" width="8" height="8" fill="#ff00ff"/><rect x="550" y="546" width="8" height="8" fill="#ff00ff"/><rect x="587" y="549" width="8" height="8" fill="#ff00ff"/><rect x="624" y="554" width="8" height="8" fill="#ff00ff"/><rect x="661" y="554" width="8" height="8" fill="#ff00ff"/><rect x="698" y="552" width="8" height="8" fill="#ff00ff"/><rect x="734" y="553" width="8" height="8" fill="#ff00ff"/></svg>
<div class="t" style="left:404.00px;top:455.69px;font-size:13.5px;line-height:13.5px;font-family:'Liberation Serif',serif;font-weight:400;color:#e4e4e4;">140%</div>
<div class="t" style="left:404.00px;top:483.69px;font-size:13.5px;line-height:13.5px;font-family:'Liberation Serif',serif;font-weight:400;color:#e4e4e4;">130%</div>
<div class="t" style="left:404.00px;top:511.69px;font-size:13.5px;line-height:13.5px;font-family:'Liberation Serif',serif;font-weight:400;color:#e4e4e4;">120%</div>
<div class="t" style="left:404.00px;top:539.69px;font-size:13.5px;line-height:13.5px;font-family:'Liberation Serif',serif;font-weight:400;color:#e4e4e4;">110%</div>
<div class="t" style="left:404.00px;top:567.69px;font-size:13.5px;line-height:13.5px;font-family:'Liberation Serif',serif;font-weight:400;color:#e4e4e4;">100%</div>
<div class="t" style="left:404.00px;top:595.69px;font-size:13.5px;line-height:13.5px;font-family:'Liberation Serif',serif;font-weight:400;color:#e4e4e4;">90%</div>
<div class="t" style="left:404.00px;top:623.69px;font-size:13.5px;line-height:13.5px;font-family:'Liberation Serif',serif;font-weight:400;color:#e4e4e4;">80%</div>
<div class="t" style="left:404.00px;top:651.69px;font-size:13.5px;line-height:13.5px;font-family:'Liberation Serif',serif;font-weight:400;color:#e4e4e4;">70%</div>
<div class="t" style="left:404.00px;top:679.69px;font-size:13.5px;line-height:13.5px;font-family:'Liberation Serif',serif;font-weight:400;color:#e4e4e4;">60%</div>
<div class="t" style="left:404.00px;top:764.69px;font-size:13.5px;line-height:13.5px;font-family:'Liberation Serif',serif;font-weight:400;color:#e4e4e4;">8</div>
<div class="t" style="left:404.00px;top:820.69px;font-size:13.5px;line-height:13.5px;font-family:'Liberation Serif',serif;font-weight:400;color:#e4e4e4;">6</div>
<div class="t" style="left:404.00px;top:876.69px;font-size:13.5px;line-height:13.5px;font-family:'Liberation Serif',serif;font-weight:400;color:#e4e4e4;">4</div>
<div class="t" style="left:404.00px;top:932.69px;font-size:13.5px;line-height:13.5px;font-family:'Liberation Serif',serif;font-weight:400;color:#e4e4e4;">2</div>
<div class="t" style="left:479.00px;top:708.69px;font-size:13.5px;line-height:13.5px;font-family:'Liberation Serif',serif;font-weight:400;color:#f4f4f4;">10% White</div>
<div class="t" style="left:479.00px;top:989.69px;font-size:13.5px;line-height:13.5px;font-family:'Liberation Serif',serif;font-weight:400;color:#f4f4f4;">10% White</div>
<div class="t" style="left:553.00px;top:708.69px;font-size:13.5px;line-height:13.5px;font-family:'Liberation Serif',serif;font-weight:400;color:#e8e8e8;">20% White</div>
<div class="t" style="left:553.00px;top:989.69px;font-size:13.5px;line-height:13.5px;font-family:'Liberation Serif',serif;font-weight:400;color:#e8e8e8;">20% White</div>
<div class="t" style="left:627.00px;top:708.69px;font-size:13.5px;line-height:13.5px;font-family:'Liberation Serif',serif;font-weight:400;color:#b8b8b8;">30% White</div>
<div class="t" style="left:627.00px;top:989.69px;font-size:13.5px;line-height:13.5px;font-family:'Liberation Serif',serif;font-weight:400;color:#b8b8b8;">30% White</div>
<div class="t" style="left:701.00px;top:708.69px;font-size:13.5px;line-height:13.5px;font-family:'Liberation Serif',serif;font-weight:400;color:#909090;">40% White</div>
<div class="t" style="left:701.00px;top:989.69px;font-size:13.5px;line-height:13.5px;font-family:'Liberation Serif',serif;font-weight:400;color:#909090;">40% White</div>
<div class="t" style="left:775.00px;top:708.69px;font-size:13.5px;line-height:13.5px;font-family:'Liberation Serif',serif;font-weight:400;color:#7c7c7c;">50% White</div>
<div class="t" style="left:775.00px;top:989.69px;font-size:13.5px;line-height:13.5px;font-family:'Liberation Serif',serif;font-weight:400;color:#7c7c7c;">50% White</div>
<div class="t" style="left:849.00px;top:708.69px;font-size:13.5px;line-height:13.5px;font-family:'Liberation Serif',serif;font-weight:400;color:#606060;">60% White</div>
<div class="t" style="left:849.00px;top:989.69px;font-size:13.5px;line-height:13.5px;font-family:'Liberation Serif',serif;font-weight:400;color:#606060;">60% White</div>
<div class="t" style="left:923.00px;top:708.69px;font-size:13.5px;line-height:13.5px;font-family:'Liberation Serif',serif;font-weight:400;color:#404040;">70% White</div>
<div class="t" style="left:923.00px;top:989.69px;font-size:13.5px;line-height:13.5px;font-family:'Liberation Serif',serif;font-weight:400;color:#404040;">70% White</div>
<div class="t" style="left:997.00px;top:708.69px;font-size:13.5px;line-height:13.5px;font-family:'Liberation Serif',serif;font-weight:400;color:#1c1c1c;">80% White</div>
<div class="t" style="left:997.00px;top:989.69px;font-size:13.5px;line-height:13.5px;font-family:'Liberation Serif',serif;font-weight:400;color:#1c1c1c;">80% White</div>
<div class="t" style="left:1071.00px;top:708.69px;font-size:13.5px;line-height:13.5px;font-family:'Liberation Serif',serif;font-weight:400;color:#101010;">90% White</div>
<div class="t" style="left:1071.00px;top:989.69px;font-size:13.5px;line-height:13.5px;font-family:'Liberation Serif',serif;font-weight:400;color:#101010;">90% White</div>
<div class="t" style="left:681.00px;top:444.65px;font-size:14px;line-height:14px;font-family:'Liberation Sans',sans-serif;font-weight:700;color:#dcdc00;transform:scaleX(1.0323);transform-origin:0 0;">Gray Scale Balance w/gamma</div>
<div class="t" style="left:977.00px;top:948.96px;font-size:16px;line-height:16px;font-family:'Liberation Sans',sans-serif;font-weight:700;color:#9a9a9a;">hcfr.sourceforge.net</div>
<div class="a" style="left:1146px;top:439px;width:748px;height:570px;border-top:2px solid #6e6e6e;border-left:2px solid #6e6e6e;border-right:2px solid #ffffff;border-bottom:2px solid #ffffff;"></div>
<div class="a" style="left:1148px;top:441px;width:744px;height:566px;border-top:2px solid #a0a0a0;border-left:2px solid #a0a0a0;border-right:2px solid #e6e6e6;border-bottom:2px solid #e6e6e6;"></div>
<div class="a" style="left:1150px;top:443px;width:74px;height:562px;background:linear-gradient(90deg,#212121,#303030);"></div>
<div class="a" style="left:1224px;top:443px;width:74px;height:562px;background:linear-gradient(90deg,#3a3a3a,#484848);"></div>
<div class="a" style="left:1298px;top:443px;width:74px;height:562px;background:linear-gradient(90deg,#4e4e4e,#646464);"></div>
<div class="a" style="left:1372px;top:443px;width:74px;height:562px;background:linear-gradient(90deg,#6a6a6a,#787878);"></div>
<div class="a" style="left:1446px;top:443px;width:74px;height:562px;background:linear-gradient(90deg,#7e7e7e,#909090);"></div>
<div class="a" style="left:1520px;top:443px;width:74px;height:562px;background:linear-gradient(90deg,#8c8c8c,#9c9c9c);"></div>
<div class="a" style="left:1594px;top:443px;width:74px;height:562px;background:linear-gradient(90deg,#a6a6a6,#b6b6b6);"></div>
<div class="a" style="left:1668px;top:443px;width:74px;height:562px;background:linear-gradient(90deg,#bababa,#cbcbcb);"></div>
<div class="a" style="left:1742px;top:443px;width:74px;height:562px;background:linear-gradient(90deg,#d5d5d5,#e5e5e5);"></div>
<div class="a" style="left:1816px;top:443px;width:74px;height:562px;background:linear-gradient(90deg,#e8e8e8,#fafafa);"></div>
<svg class="a" style="left:1150px;top:443px;overflow:hidden;" width="740" height="562" viewBox="0 0 740 562"><rect x="0" y="0" width="1" height="562" fill="#044040"/><rect x="74" y="0" width="1" height="562" fill="#044040"/><rect x="148" y="0" width="1" height="562" fill="#044040"/><rect x="222" y="0" width="1" height="562" fill="#044040"/><rect x="296" y="0" width="1" height="562" fill="#044040"/><rect x="370" y="0" width="1" height="562" fill="#044040"/><rect x="444" y="0" width="1" height="562" fill="#044040"/><rect x="518" y="0" width="1" height="562" fill="#044040"/><rect x="592" y="0" width="1" height="562" fill="#044040"/><rect x="666" y="0" width="1" height="562" fill="#044040"/><rect x="0" y="28" width="740" height="1" fill="#044040"/><rect x="0" y="56" width="740" height="1" fill="#044040"/><rect x="0" y="84" width="740" height="1" fill="#044040"/><rect x="0" y="112" width="740" height="1" fill="#044040"/><rect x="0" y="140" width="740" height="1" fill="#044040"/><rect x="0" y="168" width="740" height="1" fill="#044040"/><rect x="0" y="196" width="740" height="1" fill="#044040"/><rect x="0" y="224" width="740" height="1" fill="#044040"/><rect x="0" y="252" width="740" height="1" fill="#044040"/><rect x="0" y="280" width="740" height="1" fill="#044040"/><rect x="0" y="308" width="740" height="1" fill="#044040"/><rect x="0" y="336" width="740" height="1" fill="#044040"/><rect x="0" y="364" width="740" height="1" fill="#044040"/><rect x="0" y="392" width="740" height="1" fill="#044040"/><rect x="0" y="420" width="740" height="1" fill="#044040"/><rect x="0" y="448" width="740" height="1" fill="#044040"/><rect x="0" y="476" width="740" height="1" fill="#044040"/><rect x="0" y="504" width="740" height="1" fill="#044040"/><rect x="0" y="532" width="740" height="1" fill="#044040"/><line x1="33" y1="224.5" x2="705" y2="224.5" stroke="#fff" stroke-width="1" stroke-dasharray="3,3"/><line x1="36" y1="224.5" x2="705" y2="224.5" stroke="#000" stroke-width="1" stroke-dasharray="3,3" opacity="0.35"/><polyline points="32.5,227.0 69.9,226.5 107.8,225.0 144.6,225.0 182.0,225.0 219.0,223.0 256.4,227.0 293.2,221.0 331.0,222.0 368.4,224.0 405.0,222.0 441.8,228.0 479.0,225.0 516.0,221.0 553.9,226.0 591.0,225.0 628.0,225.0 665.0,216.0 702.4,224.0" fill="none" stroke="#ffff00" stroke-width="2" shape-rendering="crispEdges"/><rect x="28" y="223" width="8" height="8" fill="#ffff00"/><rect x="66" y="222" width="8" height="8" fill="#ffff00"/><rect x="104" y="221" width="8" height="8" fill="#ffff00"/><rect x="141" y="221" width="8" height="8" fill="#ffff00"/><rect x="178" y="221" width="8" height="8" fill="#ffff00"/><rect x="215" y="219" width="8" height="8" fill="#ffff00"/><rect x="252" y="223" width="8" height="8" fill="#ffff00"/><rect x="289" y="217" width="8" height="8" fill="#ffff00"/><rect x="327" y="218" width="8" height="8" fill="#ffff00"/><rect x="364" y="220" width="8" height="8" fill="#ffff00"/><rect x="401" y="218" width="8" height="8" fill="#ffff00"/><rect x="438" y="224" width="8" height="8" fill="#ffff00"/><rect x="475" y="221" width="8" height="8" fill="#ffff00"/><rect x="512" y="217" width="8" height="8" fill="#ffff00"/><rect x="550" y="222" width="8" height="8" fill="#ffff00"/><rect x="587" y="221" width="8" height="8" fill="#ffff00"/><rect x="624" y="221" width="8" height="8" fill="#ffff00"/><rect x="661" y="212" width="8" height="8" fill="#ffff00"/><rect x="698" y="220" width="8" height="8" fill="#ffff00"/><rect x="28" y="221" width="8" height="8" fill="#e0e0e0"/><rect x="66" y="221" width="8" height="8" fill="#e0e0e0"/><rect x="104" y="221" width="8" height="8" fill="#e0e0e0"/><rect x="141" y="221" width="8" height="8" fill="#e0e0e0"/><rect x="178" y="221" width="8" height="8" fill="#e0e0e0"/><rect x="215" y="221" width="8" height="8" fill="#e0e0e0"/><rect x="252" y="221" width="8" height="8" fill="#e0e0e0"/><rect x="289" y="221" width="8" height="8" fill="#e0e0e0"/><rect x="327" y="221" width="8" height="8" fill="#e0e0e0"/><rect x="364" y="221" width="8" height="8" fill="#e0e0e0"/><rect x="401" y="221" width="8" height="8" fill="#e0e0e0"/><rect x="438" y="221" width="8" height="8" fill="#e0e0e0"/><rect x="475" y="221" width="8" height="8" fill="#e0e0e0"/><rect x="512" y="221" width="8" height="8" fill="#e0e0e0"/><rect x="550" y="221" width="8" height="8" fill="#e0e0e0"/><rect x="587" y="221" width="8" height="8" fill="#e0e0e0"/><rect x="624" y="221" width="8" height="8" fill="#e0e0e0"/><rect x="661" y="221" width="8" height="8" fill="#e0e0e0"/><rect x="698" y="221" width="8" height="8" fill="#e0e0e0"/></svg>
<div class="t" style="left:1152.00px;top:455.69px;font-size:13.5px;line-height:13.5px;font-family:'Liberation Serif',serif;font-weight:400;color:#e4e4e4;">2.9</div>
<div class="t" style="left:1152.00px;top:483.69px;font-size:13.5px;line-height:13.5px;font-family:'Liberation Serif',serif;font-weight:400;color:#e4e4e4;">2.8</div>
<div class="t" style="left:1152.00px;top:511.69px;font-size:13.5px;line-height:13.5px;font-family:'Liberation Serif',serif;font-weight:400;color:#e4e4e4;">2.7</div>
<div class="t" style="left:1152.00px;top:539.69px;font-size:13.5px;line-height:13.5px;font-family:'Liberation Serif',serif;font-weight:400;color:#e4e4e4;">2.6</div>
<div class="t" style="left:1152.00px;top:567.69px;font-size:13.5px;line-height:13.5px;font-family:'Liberation Serif',serif;font-weight:400;color:#e4e4e4;">2.5</div>
<div class="t" style="left:1152.00px;top:595.69px;font-size:13.5px;line-height:13.5px;font-family:'Liberation Serif',serif;font-weight:400;color:#e4e4e4;">2.4</div>
<div class="t" style="left:1152.00px;top:623.69px;font-size:13.5px;line-height:13.5px;font-family:'Liberation Serif',serif;font-weight:400;color:#e4e4e4;">2.3</div>
<div class="t" style="left:1152.00px;top:651.69px;font-size:13.5px;line-height:13.5px;font-family:'Liberation Serif',serif;font-weight:400;color:#e4e4e4;">2.2</div>
<div class="t" style="left:1152.00px;top:679.69px;font-size:13.5px;line-height:13.5px;font-family:'Liberation Serif',serif;font-weight:400;color:#e4e4e4;">2.1</div>
<div class="t" style="left:1152.00px;top:707.69px;font-size:13.5px;line-height:13.5px;font-family:'Liberation Serif',serif;font-weight:400;color:#e4e4e4;">2</div>
<div class="t" style="left:1152.00px;top:735.69px;font-size:13.5px;line-height:13.5px;font-family:'Liberation Serif',serif;font-weight:400;color:#e4e4e4;">1.9</div>
<div class="t" style="left:1152.00px;top:763.69px;font-size:13.5px;line-height:13.5px;font-family:'Liberation Serif',serif;font-weight:400;color:#e4e4e4;">1.8</div>
<div class="t" style="left:1152.00px;top:791.69px;font-size:13.5px;line-height:13.5px;font-family:'Liberation Serif',serif;font-weight:400;color:#e4e4e4;">1.7</div>
<div class="t" style="left:1152.00px;top:819.69px;font-size:13.5px;line-height:13.5px;font-family:'Liberation Serif',serif;font-weight:400;color:#e4e4e4;">1.6</div>
<div class="t" style="left:1152.00px;top:847.69px;font-size:13.5px;line-height:13.5px;font-family:'Liberation Serif',serif;font-weight:400;color:#e4e4e4;">1.5</div>
<div class="t" style="left:1152.00px;top:875.69px;font-size:13.5px;line-height:13.5px;font-family:'Liberation Serif',serif;font-weight:400;color:#e4e4e4;">1.4</div>
<div class="t" style="left:1152.00px;top:903.69px;font-size:13.5px;line-height:13.5px;font-family:'Liberation Serif',serif;font-weight:400;color:#e4e4e4;">1.3</div>
<div class="t" style="left:1152.00px;top:931.69px;font-size:13.5px;line-height:13.5px;font-family:'Liberation Serif',serif;font-weight:400;color:#e4e4e4;">1.2</div>
<div class="t" style="left:1152.00px;top:959.69px;font-size:13.5px;line-height:13.5px;font-family:'Liberation Serif',serif;font-weight:400;color:#e4e4e4;">1.1</div>
<div class="t" style="left:1227.00px;top:989.69px;font-size:13.5px;line-height:13.5px;font-family:'Liberation Serif',serif;font-weight:400;color:#f4f4f4;">10% White</div>
<div class="t" style="left:1301.00px;top:989.69px;font-size:13.5px;line-height:13.5px;font-family:'Liberation Serif',serif;font-weight:400;color:#e8e8e8;">20% White</div>
<div class="t" style="left:1375.00px;top:989.69px;font-size:13.5px;line-height:13.5px;font-family:'Liberation Serif',serif;font-weight:400;color:#b8b8b8;">30% White</div>
<div class="t" style="left:1449.00px;top:989.69px;font-size:13.5px;line-height:13.5px;font-family:'Liberation Serif',serif;font-weight:400;color:#909090;">40% White</div>
<div class="t" style="left:1523.00px;top:989.69px;font-size:13.5px;line-height:13.5px;font-family:'Liberation Serif',serif;font-weight:400;color:#7c7c7c;">50% White</div>
<div class="t" style="left:1597.00px;top:989.69px;font-size:13.5px;line-height:13.5px;font-family:'Liberation Serif',serif;font-weight:400;color:#606060;">60% White</div>
<div class="t" style="left:1671.00px;top:989.69px;font-size:13.5px;line-height:13.5px;font-family:'Liberation Serif',serif;font-weight:400;color:#404040;">70% White</div>
<div class="t" style="left:1745.00px;top:989.69px;font-size:13.5px;line-height:13.5px;font-family:'Liberation Serif',serif;font-weight:400;color:#1c1c1c;">80% White</div>
<div class="t" style="left:1819.00px;top:989.69px;font-size:13.5px;line-height:13.5px;font-family:'Liberation Serif',serif;font-weight:400;color:#101010;">90% White</div>
<div class="t" style="left:1481.00px;top:444.65px;font-size:14px;line-height:14px;font-family:'Liberation Sans',sans-serif;font-weight:700;color:#dcdc00;transform:scaleX(1.0510);transform-origin:0 0;">EOTF(Gamma)</div>
<div class="t" style="left:1725.00px;top:948.96px;font-size:16px;line-height:16px;font-family:'Liberation Sans',sans-serif;font-weight:700;color:#9a9a9a;">hcfr.sourceforge.net</div>
<div class="a" style="left:2px;top:1015px;width:1895px;height:2px;background:#f4f4f4;"></div>
<div class="a" style="left:2px;top:1017px;width:1899px;height:2px;background:#6a6a6a;"></div>
<div class="a" style="left:2px;top:1019px;width:1899px;height:3px;background:#bcbcbc;"></div>
<div class="a" style="left:2px;top:1022px;width:1916px;height:20px;background:#f0f0f0;"></div>
<div class="a" style="left:19px;top:1030px;width:1824px;height:2px;background:#8a8a8a;"></div>
<div class="a" style="left:1901px;top:1022px;width:17px;height:20px;background:#f0f0f0;"></div>
<div class="a" style="left:0px;top:1042px;width:1920px;height:1px;background:#000;"></div>
<div class="a" style="left:0px;top:1043px;width:1920px;height:18px;background:#f0f0f0;"></div>
<div class="a" style="left:0px;top:1043px;width:54px;height:18px;background:#f0f0f0;border-right:2px solid #000;border-bottom:1px solid #000;"></div>
<div class="a" style="left:17px;top:1044px;width:1px;height:16px;background:#a0a0a0;"></div>
<div class="a" style="left:34px;top:1044px;width:1px;height:16px;background:#a0a0a0;"></div>
<svg class="a" style="left:3px;top:1046px;" width="12" height="12" viewBox="0 0 12 12"><path d="M2 2 L10 10 M10 2 L2 10" stroke="#000" stroke-width="1.3"/></svg>
<svg class="a" style="left:22px;top:1048px;" width="6" height="8" viewBox="0 0 6 8"><path d="M5 0 V8 L1 4 Z" fill="#000"/></svg>
<svg class="a" style="left:40px;top:1048px;" width="6" height="8" viewBox="0 0 6 8"><path d="M1 0 V8 L5 4 Z" fill="#000"/></svg>
<svg class="a" style="left:0px;top:1042px;" width="330" height="20" viewBox="0 0 330 20"><path d="M55 0 L62 18 H121 L127 0 Z" fill="#fff" stroke="#000" stroke-width="1"/><path d="M122 18 L128 0 L128 0 L171 0 L176 18 Z" fill="#f0f0f0" stroke="#000" stroke-width="0.8"/><path d="M171 0 L177 18 H239 L245 0" fill="#f0f0f0" stroke="#000" stroke-width="0.8"/><path d="M240 0 L247 18 H313 L320 0" fill="#f0f0f0" stroke="#000" stroke-width="0.8"/><line x1="55" y1="0.5" x2="320" y2="0.5" stroke="#000"/><path d="M56 0.5 L126 0.5" stroke="#fff" stroke-width="1.2"/></svg>
<div class="t" style="left:67.00px;top:1046.69px;font-size:11px;line-height:11px;font-family:'Liberation Sans',sans-serif;font-weight:700;color:#000;transform:scaleX(0.9649);transform-origin:0 0;">Measures</div>
<div class="t" style="left:132.00px;top:1046.69px;font-size:11px;line-height:11px;font-family:'Liberation Sans',sans-serif;font-weight:400;color:#000;transform:scaleX(0.8435);transform-origin:0 0;">Gamma</div>
<div class="t" style="left:186.00px;top:1046.69px;font-size:11px;line-height:11px;font-family:'Liberation Sans',sans-serif;font-weight:400;color:#000;transform:scaleX(0.8358);transform-origin:0 0;">Luminance</div>
<div class="t" style="left:255.00px;top:1046.69px;font-size:11px;line-height:11px;font-family:'Liberation Sans',sans-serif;font-weight:400;color:#000;transform:scaleX(0.8515);transform-origin:0 0;">RGB Levels</div>
<svg class="a" style="left:1749px;top:1043px;" width="14" height="13" viewBox="0 0 14 13"><path d="M1 1 H13 V8 L11 12 H9 L7 9 L5 12 H3 L1 8 Z" fill="#6b6b00" stroke="#222" stroke-width="0.8"/><rect x="3" y="3" width="6" height="4" fill="#e02020"/><path d="M9 9 h4 l-2 3z" fill="#ffff00"/></svg>
<div class="a" style="left:1846px;top:1045px;width:12px;height:12px;background:#ffffff;border:1px solid #7a7a7a;border-right-color:#f0f0f0;border-bottom-color:#f0f0f0;box-shadow:inset 1px 1px 0 #a0a0a0;"></div>
<div class="t" style="left:1864.00px;top:1045.84px;font-size:12px;line-height:12px;font-family:'Liberation Sans',sans-serif;font-weight:400;color:#000;transform:scaleX(0.9032);transform-origin:0 0;">Reference</div>
<div class="a" style="left:0px;top:1061px;width:1920px;height:19px;background:#e9eef7;"></div>
<div class="t" style="left:3.00px;top:1065.00px;font-size:13px;line-height:13px;font-family:'Liberation Sans',sans-serif;font-weight:400;color:#000;transform:scaleX(0.8512);transform-origin:0 0;">Ready</div>
<div class="a" style="left:1742px;top:1063px;width:73px;height:17px;border-left:1px solid #a9bcd6;border-top:1px solid #a9bcd6;"></div>
<div class="a" style="left:1821px;top:1063px;width:27px;height:17px;border-left:1px solid #a9bcd6;border-top:1px solid #a9bcd6;"></div>
<div class="t" style="left:1824.00px;top:1065.84px;font-size:12px;line-height:12px;font-family:'Liberation Sans',sans-serif;font-weight:400;color:#000;transform:scaleX(0.9728);transform-origin:0 0;">CAP</div>
<div class="a" style="left:1851px;top:1063px;width:33px;height:17px;border-left:1px solid #a9bcd6;border-top:1px solid #a9bcd6;"></div>
<div class="t" style="left:1854.00px;top:1065.84px;font-size:12px;line-height:12px;font-family:'Liberation Sans',sans-serif;font-weight:400;color:#000;transform:scaleX(1.0606);transform-origin:0 0;">NUM</div>
<div class="a" style="left:1887px;top:1063px;width:32px;height:17px;border-left:1px solid #a9bcd6;border-top:1px solid #a9bcd6;"></div></body></html>
